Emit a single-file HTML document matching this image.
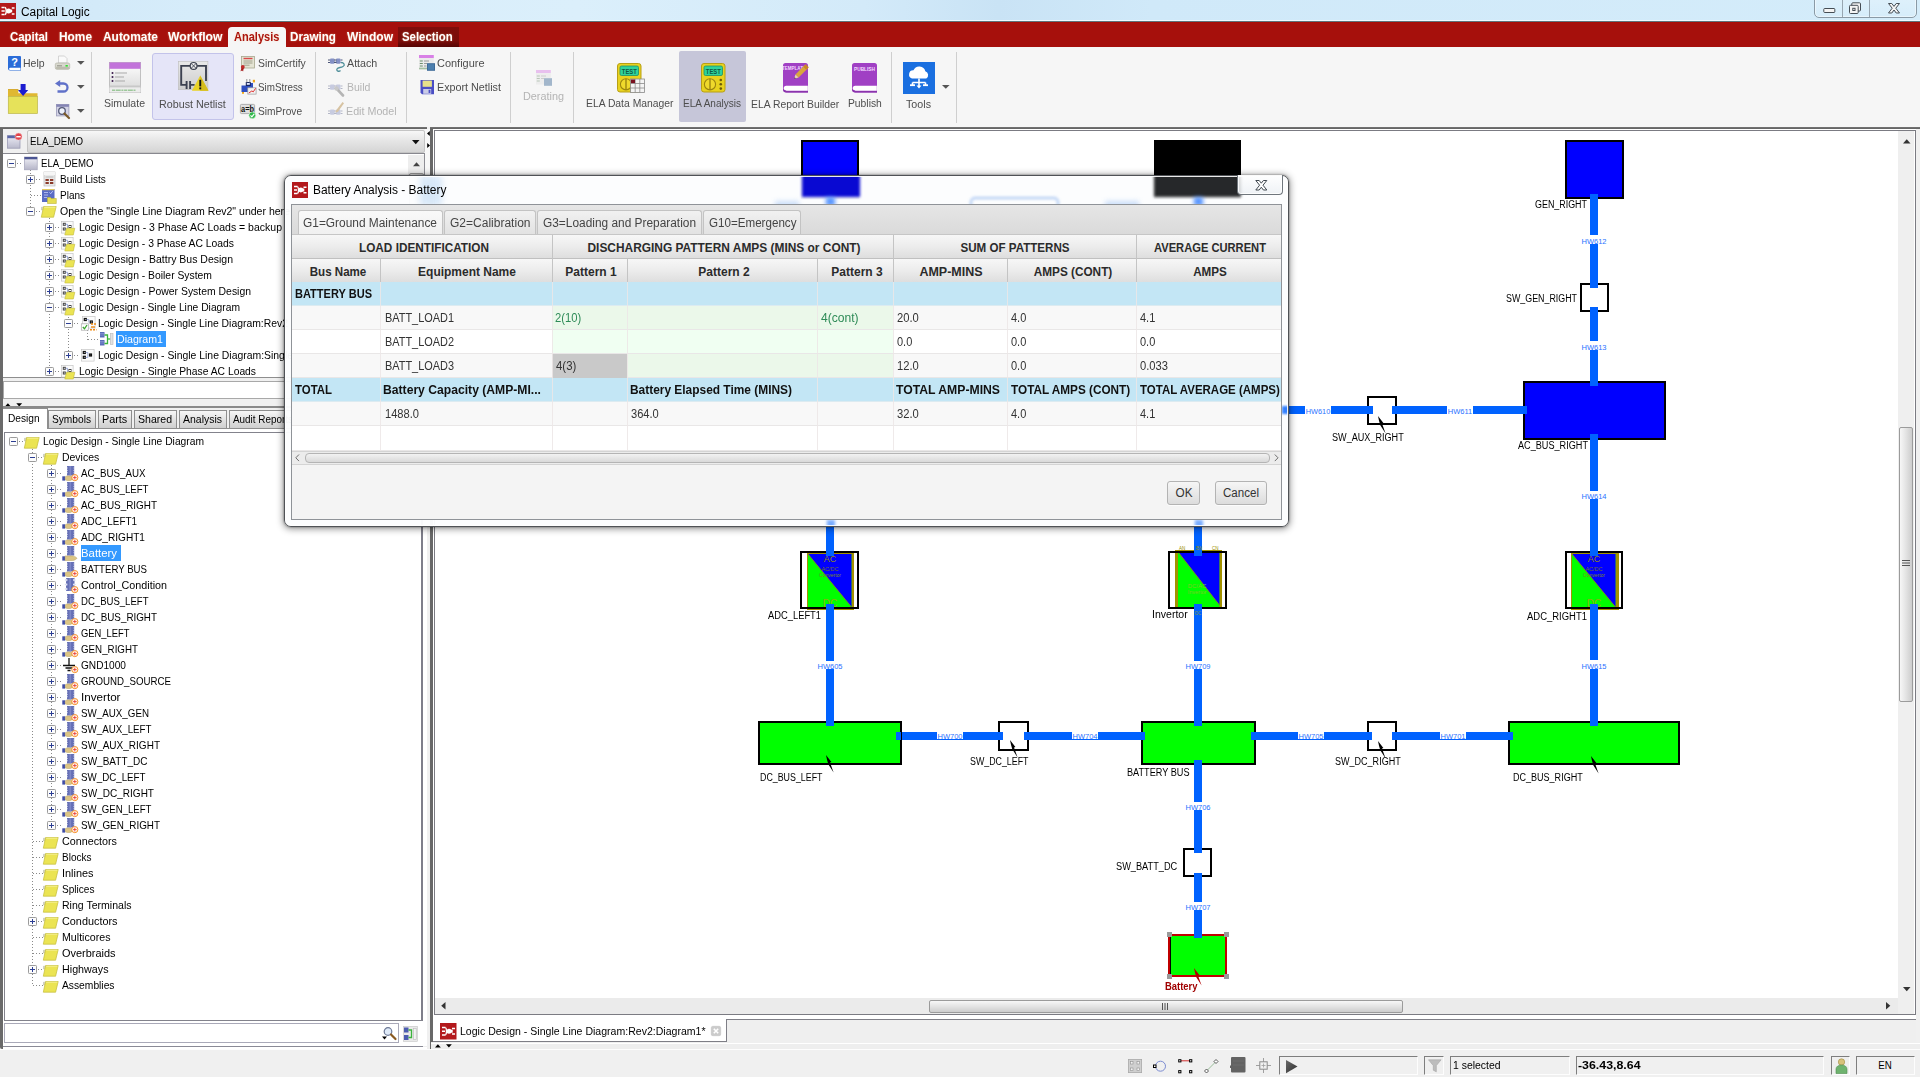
<!DOCTYPE html>
<html lang="en"><head><meta charset="utf-8"><title>Capital Logic</title>
<style>
html,body{margin:0;padding:0}
body{width:1920px;height:1077px;position:relative;overflow:hidden;background:#f0f0f0;font-family:'Liberation Sans', sans-serif}
.t{position:absolute;white-space:nowrap;line-height:1;font-family:'Liberation Sans', sans-serif}
div{box-sizing:border-box}
svg{overflow:visible}
svg text{font-family:'Liberation Sans', sans-serif}
</style></head>
<body>
<div style="position:absolute;left:0px;top:0px;width:1920px;height:20px;background:linear-gradient(90deg,#d0e8f8 0%,#d6ecfa 10%,#dbeffb 30%,#d3eaf9 45%,#c9e3f5 52%,#d0e9f9 60%,#d4ecfa 100%);"></div>
<div style="position:absolute;left:0px;top:20px;width:1920px;height:1px;background:#eefaff"></div>
<div style="position:absolute;left:0px;top:21px;width:1920px;height:1px;background:#5f737b"></div>
<svg style="position:absolute;left:0px;top:3px;" width="16" height="16" viewBox="0 0 16 16"><rect width="16" height="16" fill="#b3191c"/><g fill="none" stroke="#fff" stroke-width="1.6"><path d="M1.5 4.5h3.2M1.5 8h3.2M1.5 11.5h3.2"/><path d="M5 4.3c1.6.6 1.6 6.8 0 7.4" stroke-width="1.4"/><path d="M14.5 5h-2.7M14.5 11h-2.7"/></g><circle cx="8.6" cy="8" r="2.5" fill="#fff"/><rect x="9" y="6.6" width="3.2" height="2.8" fill="#fff"/></svg>
<span id="t0" class="t" style="left:21.3px;top:5.54px;font-size:12px;font-weight:400;color:#000;transform-origin:left center;transform:scaleX(0.9903);">Capital Logic</span>
<div style="position:absolute;left:1814.2px;top:-3px;width:102.5px;height:20.8px;border:1px solid #8a9aa6;border-radius:0 0 5px 5px;background:linear-gradient(rgba(255,255,255,.25),rgba(255,255,255,.05));box-shadow:inset 0 0 0 1px rgba(255,255,255,.45)"></div>
<div style="position:absolute;left:1842.3px;top:0px;width:1px;height:17px;background:#98a6b1"></div>
<div style="position:absolute;left:1869.4px;top:0px;width:1px;height:17px;background:#98a6b1"></div>
<svg style="position:absolute;left:1814px;top:0px;" width="103" height="18" viewBox="0 0 103 18"><rect x="9.800" y="8.500" width="11" height="4" rx=".8" fill="#f4f4f4" stroke="#454d55"/><g fill="#f4f4f4" stroke="#454d55"><rect x="37.800" y="2.800" width="8.700" height="8.200" rx="1"/><rect x="35.500" y="5.300" width="8.700" height="8.200" rx="1"/><rect x="38.800" y="8.300" width="2.200" height="2.200" fill="#fff"/></g><path d="M74.500 3.500h3.300l2.200 2.900 2.200-2.900h3.300l-3.700 4.700 3.700 4.800h-3.300l-2.200-3-2.200 3h-3.300l3.700-4.800z" fill="#f4f4f4" stroke="#454d55" stroke-width="1"/></svg>
<div style="position:absolute;left:0px;top:22px;width:1920px;height:25px;background:linear-gradient(#ad0c02 0,#a6100c 1.500px)"></div>
<div style="position:absolute;left:398px;top:27px;width:60.5px;height:20px;background:linear-gradient(#7f0e0a 0%,#7a0c09 70%,#560504 100%)"></div>
<div style="position:absolute;left:228px;top:27px;width:57.5px;height:20px;background:#f6f6f6;border-radius:4px 4px 0 0"></div>
<span id="t1" class="t" style="left:10px;top:29.91px;font-size:13px;font-weight:700;color:#fff;transform-origin:left center;transform:scaleX(0.8767);text-shadow:0 0 2px rgba(255,220,160,.55)">Capital</span>
<span id="t2" class="t" style="left:59.4px;top:29.91px;font-size:13px;font-weight:700;color:#fff;transform-origin:left center;transform:scaleX(0.9135);text-shadow:0 0 2px rgba(255,220,160,.55)">Home</span>
<span id="t3" class="t" style="left:102.8px;top:29.91px;font-size:13px;font-weight:700;color:#fff;transform-origin:left center;transform:scaleX(0.9174);text-shadow:0 0 2px rgba(255,220,160,.55)">Automate</span>
<span id="t4" class="t" style="left:167.5px;top:29.91px;font-size:13px;font-weight:700;color:#fff;transform-origin:left center;transform:scaleX(0.9354);text-shadow:0 0 2px rgba(255,220,160,.55)">Workflow</span>
<span id="t5" class="t" style="left:233.6px;top:29.91px;font-size:13px;font-weight:700;color:#ab150e;transform-origin:left center;transform:scaleX(0.8488);text-shadow:0 0 2px rgba(255,200,150,.5)">Analysis</span>
<span id="t6" class="t" style="left:290px;top:29.91px;font-size:13px;font-weight:700;color:#fff;transform-origin:left center;transform:scaleX(0.8967);text-shadow:0 0 2px rgba(255,220,160,.55)">Drawing</span>
<span id="t7" class="t" style="left:346.8px;top:29.91px;font-size:13px;font-weight:700;color:#fff;transform-origin:left center;transform:scaleX(0.9255);text-shadow:0 0 2px rgba(255,220,160,.55)">Window</span>
<span id="t8" class="t" style="left:402.4px;top:29.91px;font-size:13px;font-weight:700;color:#fff;transform-origin:left center;transform:scaleX(0.8755);text-shadow:0 0 2px rgba(255,220,160,.55)">Selection</span>
<div style="position:absolute;left:0px;top:47px;width:1920px;height:79.5px;background:#f6f6f6"></div>
<div style="position:absolute;left:91px;top:51.5px;width:1px;height:71px;background:#cfcfcf"></div>
<div style="position:absolute;left:315px;top:51.5px;width:1px;height:71px;background:#cfcfcf"></div>
<div style="position:absolute;left:406px;top:51.5px;width:1px;height:71px;background:#cfcfcf"></div>
<div style="position:absolute;left:510px;top:51.5px;width:1px;height:71px;background:#cfcfcf"></div>
<div style="position:absolute;left:573px;top:51.5px;width:1px;height:71px;background:#cfcfcf"></div>
<div style="position:absolute;left:890.5px;top:51.5px;width:1px;height:71px;background:#cfcfcf"></div>
<div style="position:absolute;left:956px;top:51.5px;width:1px;height:71px;background:#cfcfcf"></div>
<div style="position:absolute;left:0px;top:126.8px;width:427px;height:2.5px;background:linear-gradient(#8a8a8a,#5c5c5c 45%,#6e6e6e)"></div>
<div style="position:absolute;left:430px;top:126.8px;width:1490px;height:2.5px;background:linear-gradient(#8a8a8a,#5c5c5c 45%,#6e6e6e)"></div>
<svg style="position:absolute;left:7.8px;top:55.6px;" width="13" height="15" viewBox="0 0 13 15"><path d="M1 0h11a1 1 0 0 1 1 1v13.500H2a2 2 0 0 1-2-2V1a1 1 0 0 1 1-1z" fill="#2b6cd8"/><path d="M1.500 11.800h11v2.200H2.200a1.100 1.100 0 0 1 0-2.200z" fill="#fff"/><text x="6.600" y="9.800" font-size="11" font-weight="700" fill="#fff" text-anchor="middle">?</text></svg>
<span id="t9" class="t" style="left:23.4px;top:57.55px;font-size:11.5px;font-weight:400;color:#4d4d4d;transform-origin:left center;transform:scaleX(0.9131);">Help</span>
<svg style="position:absolute;left:54.8px;top:56px;" width="15" height="14" viewBox="0 0 15 14"><path d="M3.500 0h6l2.500 2.500V7h-8.500z" fill="#fafafa" stroke="#bdbdbd" stroke-width=".6"/><rect x="0.300" y="7" width="14.400" height="6.300" rx="1.500" fill="#d9d9cf" stroke="#a9a99c" stroke-width=".6"/><rect x="1" y="10.800" width="13" height="2.500" rx="1" fill="#bcbcae"/><rect x="10.500" y="9" width="2.300" height="1.600" fill="#2fe02f"/><rect x="2" y="9.300" width="5" height="1" fill="#8f8f84"/></svg>
<svg style="position:absolute;left:77.2px;top:61px;" width="8" height="4" viewBox="0 0 8 4"><path d="M0 0h7.600l-3.800 3.800z" fill="#555"/></svg>
<svg style="position:absolute;left:8.2px;top:84px;" width="30" height="30" viewBox="0 0 30 30"><path d="M0 5.200h10.300l0 4h19.200v3.500H0z" fill="#e0b832"/><path d="M0 5.200h10.300v.8H0z" fill="#d2a428"/><rect x=".3" y="12.400" width="29.100" height="17" fill="#e6e25a" stroke="#bdb645" stroke-width=".7"/><path d="M12.600 0h5v5.900h2.600l-5.100 6.100-5.100-6.100h2.600z" fill="#1c1cd0"/></svg>
<svg style="position:absolute;left:55px;top:80px;" width="15" height="13.5" viewBox="0 0 15 13.5"><path d="M3.500 3.500H8.500a4 4 0 0 1 0 8H2.500" fill="none" stroke="#6071c9" stroke-width="2.300"/><path d="M0 3.500l5.200-3.500v7z" fill="#6071c9"/></svg>
<svg style="position:absolute;left:77.2px;top:85.3px;" width="8" height="4" viewBox="0 0 8 4"><path d="M0 0h7.600l-3.800 3.800z" fill="#555"/></svg>
<svg style="position:absolute;left:55.6px;top:103.8px;" width="14" height="14.5" viewBox="0 0 14 14.5"><rect x=".4" y=".4" width="12.500" height="11.500" fill="#d4d4e6" stroke="#9c9cba" stroke-width=".8"/><rect x=".4" y=".4" width="12.500" height="2.400" fill="#8484b4"/><circle cx="6" cy="7" r="3.300" fill="#eef2fb" stroke="#555a78" stroke-width="1.300"/><path d="M8.500 9.500l4.500 4.500" stroke="#7a5a2a" stroke-width="2.200" stroke-linecap="round"/></svg>
<svg style="position:absolute;left:77.2px;top:109.4px;" width="8" height="4" viewBox="0 0 8 4"><path d="M0 0h7.600l-3.800 3.800z" fill="#555"/></svg>
<svg style="position:absolute;left:108.8px;top:62px;" width="32" height="31" viewBox="0 0 32 31"><defs><linearGradient id="sg" x1="0" y1="0" x2="0" y2="1"><stop offset="0" stop-color="#fff"/><stop offset="1" stop-color="#d6d6d6"/></linearGradient></defs><rect x=".4" y=".4" width="31.200" height="30.200" fill="url(#sg)" stroke="#b4b4b4" stroke-width=".8"/><rect x=".4" y=".4" width="31.200" height="6.400" fill="#c273da"/><rect x=".4" y="23.500" width="31.200" height="2" fill="#c8c8c8"/><rect x=".4" y="25.500" width="31.200" height="5" fill="#ececec"/><g fill="#3a1a4a"><circle cx="3.500" cy="11" r="1"/><circle cx="3.500" cy="15" r="1"/><circle cx="3.500" cy="19" r="1"/></g><g stroke="#a9a9a9" stroke-width="1"><path d="M6 11h12M6 15h9M6 19h10"/></g><path d="M3 28.200h24" stroke="#9cc79a" stroke-width="1.400" stroke-dasharray="3 .7 5 .7 2 .7"/></svg>
<span id="t10" class="t" style="left:104px;top:97.75px;font-size:11.5px;font-weight:400;color:#4d4d4d;transform-origin:left center;transform:scaleX(0.9162);">Simulate</span>
<div style="position:absolute;left:152px;top:53px;width:81.5px;height:66.5px;background:#e5e5f8;border:1px solid #c3c3ea;border-radius:3px"></div>
<svg style="position:absolute;left:177.8px;top:61.3px;" width="30.5" height="29.5" viewBox="0 0 30.5 29.5"><defs><linearGradient id="rg" x1="0" y1="0" x2="0" y2="1"><stop offset="0" stop-color="#e9e9e9"/><stop offset="1" stop-color="#cdcdcd"/></linearGradient></defs><rect x=".3" y=".3" width="29.600" height="28.400" fill="url(#rg)" stroke="#bdbdbd" stroke-width=".6"/><path d="M12.100 4.900H3.200v19h5.400M8.600 19.900v8M12.100 19.900v8M12.100 23.900h4.500M19.100 4.900H28v15" fill="none" stroke="#3c4150" stroke-width="1.900"/><circle cx="15.600" cy="4.900" r="3.400" fill="#ececec" stroke="#3c4150" stroke-width="1.200"/><path d="M13.300 2.600l4.600 4.600M17.900 2.600l-4.600 4.600" stroke="#3c4150" stroke-width=".9"/><path d="M22.200 14.500l8.300 15.300H13.900z" fill="#e9d226"/><path d="M22.200 14.500l8.300 15.300h-8.300z" fill="#d6bd1c"/><rect x="21.300" y="18.800" width="1.900" height="6.600" fill="#111"/><rect x="21.300" y="26.400" width="1.900" height="1.900" fill="#111"/></svg>
<span id="t11" class="t" style="left:158.8px;top:98.75px;font-size:11.5px;font-weight:400;color:#4d4d4d;transform-origin:left center;transform:scaleX(0.9330);">Robust Netlist</span>
<svg style="position:absolute;left:240px;top:55.5px;" width="15.5" height="15.5" viewBox="0 0 15.5 15.5"><rect x="1.500" y=".4" width="13" height="11.600" fill="#e4e4d4" stroke="#a7a78f" stroke-width=".8"/><path d="M3.500 2.500h9" stroke="#d84a4a" stroke-width="1.400"/><path d="M3.500 5h9M3.500 7h9M3.500 9.200h6" stroke="#9a9a86" stroke-width=".9"/><circle cx="2.800" cy="11" r="1.900" fill="#c22a2a"/><path d="M1.500 12l-1 3.200 1.600-.8 1 1.100.6-3.300z" fill="#a61e1e"/></svg>
<span id="t12" class="t" style="left:258.3px;top:57.66px;font-size:11.5px;font-weight:400;color:#4d4d4d;transform-origin:left center;transform:scaleX(0.9014);">SimCertify</span>
<svg style="position:absolute;left:240.5px;top:79px;" width="15.5" height="15.5" viewBox="0 0 15.5 15.5"><path d="M.5 6.500h5v-2.500h6.500v5h2.500V13H.5z" fill="#2e4fc0"/><rect x="4.800" y="3" width="5" height="4" fill="#15245e"/><rect x="5.800" y="4" width="3" height="1.800" fill="#dfe6ff"/><path d="M5.800 0v3.500M8.800 0v3.500" stroke="#8c8c8c" stroke-width=".9"/><rect x="11.800" y=".8" width="2.200" height="2.600" fill="#f0a81c"/><rect x="1" y="13" width="2" height="1.800" fill="#f0a81c"/><rect x="6.800" y="8.800" width="8.300" height="6.300" fill="#f2f2f2" stroke="#9a9a9a" stroke-width=".7"/><path d="M7.800 14l3-2 1.500.8 2.300-3.500" fill="none" stroke="#e03030" stroke-width="1"/></svg>
<span id="t13" class="t" style="left:258.3px;top:81.75px;font-size:11.5px;font-weight:400;color:#4d4d4d;transform-origin:left center;transform:scaleX(0.8530);">SimStress</span>
<svg style="position:absolute;left:240px;top:104px;" width="15.5" height="15" viewBox="0 0 15.5 15"><rect x=".4" y=".4" width="14.200" height="9.200" rx="1" fill="#e0e0e0" stroke="#9d9d9d" stroke-width=".8"/><text x="7.500" y="7.800" font-size="8.500" font-weight="700" text-anchor="middle" fill="#111" textLength="13" lengthAdjust="spacingAndGlyphs">a=b</text><circle cx="12.300" cy="11.300" r="3.400" fill="#2eb84a" stroke="#eafbe9" stroke-width=".6"/><path d="M10.500 11.300l1.400 1.500 2.300-2.900" fill="none" stroke="#fff" stroke-width="1.200"/></svg>
<span id="t14" class="t" style="left:258.3px;top:105.75px;font-size:11.5px;font-weight:400;color:#4d4d4d;transform-origin:left center;transform:scaleX(0.8845);">SimProve</span>
<svg style="position:absolute;left:327.6px;top:55.5px;" width="17.5" height="16" viewBox="0 0 17.5 16"><g stroke="#4b5577" stroke-width="1"><path d="M0 4h2.500M0 6.500h2.500M12.500 4h2M12.500 6.500h2"/></g><rect x="2" y="2.600" width="4.500" height="5.200" rx="1" fill="#8390c4"/><rect x="8" y="2.600" width="4.500" height="5.200" rx="1" fill="#8390c4"/><path d="M6 4h2.500M6 6.400h2.500" stroke="#4b5577" stroke-width="1.200"/><path d="M13 6.500c3 0 4.500 2.500 2 4s-5 .5-6 2.500 2 3 3.500 1.500" fill="none" stroke="#4f8f9a" stroke-width="1.300"/></svg>
<span id="t15" class="t" style="left:346.8px;top:57.66px;font-size:11.5px;font-weight:400;color:#4d4d4d;transform-origin:left center;transform:scaleX(0.9292);">Attach</span>
<svg style="position:absolute;left:327.6px;top:81.5px;" width="17.5" height="16" viewBox="0 0 17.5 16"><g stroke="#b3b6c6" stroke-width="1"><path d="M0 4h2.500M0 6.500h2.500M12.500 4h2M12.500 6.500h2"/></g><rect x="2" y="2.600" width="4.500" height="5.200" rx="1" fill="#c7cbe0"/><rect x="8" y="2.600" width="4.500" height="5.200" rx="1" fill="#c7cbe0"/><path d="M6 4h2.500M6 6.400h2.500" stroke="#b3b6c6" stroke-width="1.200"/><path d="M9 7l6 6.500" stroke="#b5b5b5" stroke-width="2.600" stroke-linecap="round"/><circle cx="8.500" cy="6.500" r="2.200" fill="#c9c9c9"/></svg>
<span id="t16" class="t" style="left:347px;top:81.75px;font-size:11.5px;font-weight:400;color:#b4b4b4;transform-origin:left center;transform:scaleX(0.9109);">Build</span>
<svg style="position:absolute;left:327.6px;top:100.5px;" width="17.5" height="16" viewBox="0 0 17.5 16"><g stroke="#b3b6c6" stroke-width="1"><path d="M0 10h2.500M0 12.500h2.500M12.500 10h2M12.500 12.500h2"/></g><rect x="2" y="8.600" width="4.500" height="5.200" rx="1" fill="#c7cbe0"/><rect x="8" y="8.600" width="4.500" height="5.200" rx="1" fill="#c7cbe0"/><path d="M6 10h2.500M6 12.400h2.500" stroke="#b3b6c6" stroke-width="1.200"/><path d="M8 9.500l6.500-8.500 1.500 1.200-6 8.500-2.500.8z" fill="#d7c3a2"/></svg>
<span id="t17" class="t" style="left:346.1px;top:105.75px;font-size:11.5px;font-weight:400;color:#b4b4b4;transform-origin:left center;transform:scaleX(0.9329);">Edit Model</span>
<svg style="position:absolute;left:419.3px;top:54.8px;" width="16" height="16" viewBox="0 0 16 16"><rect x="0" y="0" width="14.800" height="3.200" fill="#d880e6"/><rect x="0" y="3.200" width="14.800" height="11.300" fill="#ebebeb"/><path d="M.8 6h3M.8 8.500h3M.8 11h3" stroke="#6f8f6f" stroke-width="1.100"/><path d="M5 6h5M5 8.500h3M5 11h2.500" stroke="#9c9c9c" stroke-width="1.100"/><path d="M0 13.500h8" stroke="#a5bfa2" stroke-width="1.600"/><rect x="8" y="8.200" width="8" height="7.600" fill="#3d6a98"/><rect x="9" y="9.200" width="6" height="5.600" fill="#4d7fae"/></svg>
<span id="t18" class="t" style="left:436.5px;top:57.66px;font-size:11.5px;font-weight:400;color:#4d4d4d;transform-origin:left center;transform:scaleX(0.9524);">Configure</span>
<svg style="position:absolute;left:420.3px;top:79.8px;" width="14.5" height="14.3" viewBox="0 0 14.5 14.3"><path d="M.5 0h13.500v14.300H2L.5 12.800z" fill="#4a4ec4"/><rect x="2.600" y=".6" width="9.300" height="6.200" fill="#e6e08a"/><rect x="3.200" y="9" width="8" height="4.800" fill="#c9cbe6"/><rect x="8.600" y="9.800" width="1.800" height="3.200" fill="#4a4ec4"/></svg>
<span id="t19" class="t" style="left:437px;top:81.75px;font-size:11.5px;font-weight:400;color:#4d4d4d;transform-origin:left center;transform:scaleX(0.9358);">Export Netlist</span>
<svg style="position:absolute;left:536px;top:70px;" width="16" height="16" viewBox="0 0 16 16"><g opacity=".45"><rect x="0" y="0" width="14.800" height="3.200" fill="#d880e6"/><rect x="0" y="3.200" width="14.800" height="11.300" fill="#e4e4e4"/><path d="M.8 6h3M.8 8.500h3M.8 11h3" stroke="#6f8f6f" stroke-width="1.100"/><path d="M5 6h5M5 8.500h3" stroke="#9c9c9c" stroke-width="1.100"/><rect x="8" y="8.200" width="8" height="7.600" fill="#3d6a98"/></g></svg>
<span id="t20" class="t" style="left:523.3px;top:90.55px;font-size:11.5px;font-weight:400;color:#b4b4b4;transform-origin:left center;transform:scaleX(0.9432);">Derating</span>
<svg style="position:absolute;left:617px;top:63px;" width="28" height="30" viewBox="0 0 28 30"><rect x=".5" y=".5" width="23.500" height="28.500" rx="2.500" fill="#e8d21e" stroke="#b89f14" stroke-width="1"/><rect x="3" y="3" width="18.500" height="9.500" rx="1.500" fill="#2fd39b" stroke="#1e8f6a" stroke-width=".8"/><text x="12.300" y="10.700" font-size="8" font-weight="700" fill="#0e5a43" text-anchor="middle" textLength="15" lengthAdjust="spacingAndGlyphs">TEST</text><circle cx="9" cy="21.300" r="5.600" fill="#efd92c" stroke="#9c8510" stroke-width="1.100"/><path d="M9 15.700v11.200" stroke="#9c8510" stroke-width="1.400"/><rect x="13.500" y="16" width="14" height="13.500" fill="#f4f4f4" stroke="#8a8a8a" stroke-width=".8"/><path d="M13.500 20.500h14M13.500 25h14M18.200 16v13.500M22.800 16v13.500" stroke="#8a8a8a" stroke-width=".8"/><rect x="14" y="16.500" width="4" height="3.600" fill="#7a1020"/></svg>
<span id="t21" class="t" style="left:586.3px;top:97.66px;font-size:11.5px;font-weight:400;color:#4d4d4d;transform-origin:left center;transform:scaleX(0.9005);">ELA Data Manager</span>
<div style="position:absolute;left:679px;top:51.3px;width:67px;height:70.5px;background:#c6c6d9;border-radius:2px"></div>
<svg style="position:absolute;left:701px;top:63px;" width="25" height="30" viewBox="0 0 25 30"><rect x=".5" y=".5" width="23.500" height="28.500" rx="2.500" fill="#e8d21e" stroke="#b89f14" stroke-width="1"/><rect x="3" y="3" width="18.500" height="9.500" rx="1.500" fill="#2fd39b" stroke="#1e8f6a" stroke-width=".8"/><text x="12.300" y="10.700" font-size="8" font-weight="700" fill="#0e5a43" text-anchor="middle" textLength="15" lengthAdjust="spacingAndGlyphs">TEST</text><circle cx="9" cy="21.300" r="5.600" fill="#efd92c" stroke="#9c8510" stroke-width="1.100"/><path d="M9 15.700v11.200" stroke="#9c8510" stroke-width="1.400"/><g fill="#6b5c0a"><circle cx="19.800" cy="17" r="1.300"/><circle cx="19.800" cy="21.300" r="1.300"/><circle cx="19.800" cy="25.600" r="1.300"/></g></svg>
<span id="t22" class="t" style="left:683.3px;top:97.66px;font-size:11.5px;font-weight:400;color:#4d4d4d;transform-origin:left center;transform:scaleX(0.8724);">ELA Analysis</span>
<svg style="position:absolute;left:783px;top:63px;" width="29" height="30" viewBox="0 0 29 30"><path d="M2.500 0h20a2.500 2.500 0 0 1 2.500 2.500V29.500H3.500A3.500 3.500 0 0 1 0 26V2.500A2.500 2.500 0 0 1 2.500 0z" fill="#a040c4"/><path d="M2.800 22.800h22v5H3.200a2.500 2.500 0 0 1 0-5z" fill="#fff"/><path d="M0 26a3.500 3.500 0 0 0 3.500 3.500H25v-1.500H3.500z" fill="#8a34ac"/><text x="11" y="6.800" font-size="4.500" font-weight="700" fill="#f3dcff" text-anchor="middle">TEMPLATE</text><g transform="translate(14,13) rotate(-45)"><rect x="0" y="-2.200" width="14" height="4.400" fill="#d9a63c"/><rect x="11" y="-2.200" width="3.500" height="4.400" fill="#c8862a"/><path d="M0-2.200L-4 0 0 2.200z" fill="#e9d4a8"/><path d="M-2.500-.9L-4 0l1.500.9z" fill="#333"/></g></svg>
<span id="t23" class="t" style="left:750.5px;top:98.75px;font-size:11.5px;font-weight:400;color:#4d4d4d;transform-origin:left center;transform:scaleX(0.9027);">ELA Report Builder</span>
<svg style="position:absolute;left:852px;top:63px;" width="25" height="30" viewBox="0 0 25 30"><path d="M2.500 0h20a2.500 2.500 0 0 1 2.500 2.500V29.500H3.500A3.500 3.500 0 0 1 0 26V2.500A2.500 2.500 0 0 1 2.500 0z" fill="#a040c4"/><path d="M2.800 22.800h22v5H3.200a2.500 2.500 0 0 1 0-5z" fill="#fff"/><path d="M0 26a3.500 3.500 0 0 0 3.500 3.500H25v-1.500H3.500z" fill="#8a34ac"/><text x="12.500" y="8" font-size="5.600" font-weight="700" fill="#f3dcff" text-anchor="middle" textLength="21" lengthAdjust="spacingAndGlyphs">PUBLISH</text></svg>
<span id="t24" class="t" style="left:847.5px;top:97.66px;font-size:11.5px;font-weight:400;color:#4d4d4d;transform-origin:left center;transform:scaleX(0.8961);">Publish</span>
<svg style="position:absolute;left:903px;top:62px;" width="32" height="32" viewBox="0 0 32 32"><rect width="32" height="32" fill="#1a6fe0"/><path d="M9 16.500a4.200 4.200 0 0 1 1.500-8.200 6.200 6.200 0 0 1 11.800 1 4 4 0 0 1 1 7.200z" fill="#fff"/><path d="M16 16.500v8M9.500 20.500h13M9.500 20.500v2.500M22.500 20.500v2.500" stroke="#fff" stroke-width="1.600" fill="none"/><path d="M13.500 23.500h5l-2.500 3z" fill="#fff"/><rect x="7" y="22.300" width="5" height="1.800" fill="#fff"/><rect x="20" y="22.300" width="5" height="1.800" fill="#fff"/></svg>
<span id="t25" class="t" style="left:906.3px;top:98.75px;font-size:11.5px;font-weight:400;color:#4d4d4d;transform-origin:left center;transform:scaleX(0.9308);">Tools</span>
<svg style="position:absolute;left:942px;top:85.3px;" width="8" height="4" viewBox="0 0 8 4"><path d="M0 0h7.600l-3.800 3.800z" fill="#555"/></svg>
<div style="position:absolute;left:0px;top:129px;width:2.7px;height:919.6px;background:#6a6a6a;border-radius:0 0 0 2px"></div>
<div style="position:absolute;left:2.7px;top:129px;width:424.3px;height:918px;background:#f0f0f0"></div>
<div style="position:absolute;left:425px;top:129px;width:5px;height:290px;background:#f8f8f8"></div>
<svg style="position:absolute;left:427px;top:131px;" width="3" height="17.5" viewBox="0 0 3 17.5"><path d="M2.800 0v5l-2.800-2.500z" fill="#000"/><path d="M.2 12v5l2.800-2.500z" fill="#000"/></svg>
<svg style="position:absolute;left:6.5px;top:132.8px;" width="15.5" height="16" viewBox="0 0 15.5 16"><defs><linearGradient id="wg" x1="0" y1="0" x2="0" y2="1"><stop offset="0" stop-color="#ededf6"/><stop offset="1" stop-color="#b9b9cc"/></linearGradient></defs><rect x=".4" y="2.600" width="12.600" height="12.600" fill="url(#wg)" stroke="#9c9cb4" stroke-width=".8"/><rect x=".4" y="2.600" width="12.600" height="2.600" fill="#5a66a8"/><circle cx="11.500" cy="3.600" r="3.500" fill="#e0434b" stroke="#f7c6c8" stroke-width=".5"/><rect x="9.300" y="3" width="4.400" height="1.400" fill="#fff"/></svg>
<div style="position:absolute;left:27.3px;top:129.5px;width:397.3px;height:23px;background:linear-gradient(#f7f7f7 0%,#e6e6e6 45%,#d5d5d5 100%);border:1px solid #c4c4c4;border-radius:2px"></div>
<span id="t26" class="t" style="left:30.2px;top:135.67px;font-size:11px;font-weight:400;color:#000;transform-origin:left center;transform:scaleX(0.8845);">ELA_DEMO</span>
<svg style="position:absolute;left:411.5px;top:140px;" width="8" height="4.5" viewBox="0 0 8 4.5"><path d="M0 0h7.500l-3.750 4.200z" fill="#111"/></svg>
<div style="position:absolute;left:3px;top:153px;width:422px;height:225px;background:#fff;border-top:1.500px solid #88888f;border-bottom:1px solid #8e8e8e;border-right:1px solid #8e8e95"></div>
<div style="position:absolute;left:408.2px;top:154.5px;width:15.8px;height:222.5px;background:#eeeeee"></div>
<svg style="position:absolute;left:413px;top:162px;" width="7" height="4.5" viewBox="0 0 7 4.5"><path d="M0 4.200h7l-3.500-4z" fill="#444"/></svg>
<div style="position:absolute;left:409px;top:173.3px;width:14.5px;height:120px;background:linear-gradient(90deg,#f7f7f7,#e3e3e3 50%,#cdcdcd);border:1px solid #9b9b9b;border-radius:2px"></div>
<svg style="position:absolute;left:0px;top:0px;" width="1" height="1" viewBox="0 0 1 1"><path d="M30.500 170v37" stroke="#8a8a8a" stroke-width="1" stroke-dasharray="1 2" fill="none"/><path d="M49.500 218v149" stroke="#8a8a8a" stroke-width="1" stroke-dasharray="1 2" fill="none"/><path d="M68.500 314v37" stroke="#8a8a8a" stroke-width="1" stroke-dasharray="1 2" fill="none"/><path d="M87.500 330v10" stroke="#8a8a8a" stroke-width="1" stroke-dasharray="1 2" fill="none"/></svg>
<svg style="position:absolute;left:0px;top:0px;" width="1" height="1" viewBox="0 0 1 1"><path d="M17 163.5H23" stroke="#8a8a8a" stroke-width="1" stroke-dasharray="1 2" fill="none"/><rect x="7.5" y="159.5" width="8" height="8" rx=".8" fill="#fcfcfc" stroke="#9b9b9b" stroke-width="1"/><path d="M9.0 163.5h5" stroke="#2c3e93" stroke-width="1"/></svg>
<svg style="position:absolute;left:23.8px;top:156.7px;" width="16" height="16" viewBox="0 0 16 16"><defs><linearGradient id="wg2" x1="0" y1="0" x2="0" y2="1"><stop offset="0" stop-color="#f2f2f8"/><stop offset="1" stop-color="#b5b5c8"/></linearGradient></defs><rect x=".4" y="0" width="12.800" height="12.800" fill="url(#wg2)" stroke="#a5a5bb" stroke-width=".7"/><rect x=".4" y="0" width="12.800" height="2.300" fill="#4b5593"/></svg>
<span id="t27" class="t" style="left:40.6px;top:157.97px;font-size:11px;font-weight:400;color:#000;transform-origin:left center;transform:scaleX(0.8761);">ELA_DEMO</span>
<svg style="position:absolute;left:0px;top:0px;" width="1" height="1" viewBox="0 0 1 1"><path d="M36 179.5H42" stroke="#8a8a8a" stroke-width="1" stroke-dasharray="1 2" fill="none"/><rect x="26.5" y="175.5" width="8" height="8" rx=".8" fill="#fcfcfc" stroke="#9b9b9b" stroke-width="1"/><path d="M28.0 179.5h5" stroke="#2c3e93" stroke-width="1"/><path d="M30.5 177.0v5" stroke="#2c3e93" stroke-width="1"/></svg>
<svg style="position:absolute;left:42.8px;top:172.2px;" width="16" height="16" viewBox="0 0 16 16"><rect x="1" y="0" width="11" height="14" fill="#e9e9e9" stroke="#bcbcbc" stroke-width=".7"/><rect x="1" y="0" width="11" height="3" fill="#f6f6f6"/><g fill="#8c3b2a"><rect x="2.500" y="7" width="3.300" height="2"/><rect x="7" y="7" width="3.300" height="2"/><rect x="2.500" y="10" width="3.300" height="2"/><rect x="7" y="10" width="3.300" height="2"/></g><path d="M2.500 5h8" stroke="#aaa" stroke-width=".8"/></svg>
<span id="t28" class="t" style="left:59.6px;top:173.97px;font-size:11px;font-weight:400;color:#000;transform-origin:left center;transform:scaleX(0.9134);">Build Lists</span>
<svg style="position:absolute;left:0px;top:0px;" width="1" height="1" viewBox="0 0 1 1"><path d="M31 195.5H42" stroke="#8a8a8a" stroke-width="1" stroke-dasharray="1 2" fill="none"/></svg>
<svg style="position:absolute;left:42.0px;top:188.7px;" width="16" height="16" viewBox="0 0 16 16"><rect x="0" y="0" width="12.500" height="13" fill="#5a6cc4"/><rect x="0" y="0" width="12.500" height="1.200" fill="#e0c860"/><path d="M2 3.500h4M2 6h4M2 8.500h3" stroke="#aeb8ee" stroke-width="1.200"/><path d="M7.500 3.500l1.200 1.200 2-2.500" stroke="#c8d0ff" fill="none" stroke-width=".9"/><path d="M5.500 8.500h3l.8 1h5v5H5.500z" fill="#e6de50" stroke="#bdb53a" stroke-width=".6"/></svg>
<span id="t29" class="t" style="left:59.6px;top:189.97px;font-size:11px;font-weight:400;color:#000;transform-origin:left center;transform:scaleX(0.9081);">Plans</span>
<svg style="position:absolute;left:0px;top:0px;" width="1" height="1" viewBox="0 0 1 1"><path d="M36 211.5H42" stroke="#8a8a8a" stroke-width="1" stroke-dasharray="1 2" fill="none"/><rect x="26.5" y="207.5" width="8" height="8" rx=".8" fill="#fcfcfc" stroke="#9b9b9b" stroke-width="1"/><path d="M28.0 211.5h5" stroke="#2c3e93" stroke-width="1"/></svg>
<svg style="position:absolute;left:41.199999999999996px;top:205.39999999999998px;" width="16" height="16" viewBox="0 0 16 16"><path d="M.5 2.200h4.500l1 1.300h5.500V5H.5z" fill="#d9d9c7" stroke="#b7b7a2" stroke-width=".5"/><path d="M2.600 1.500h12.600L12.600 12.200H.3z" fill="#ebe453" stroke="#c3bb3a" stroke-width=".7"/><path d="M3.200 2.200h11.200" stroke="#f7f3a3" stroke-width=".8"/></svg>
<span id="t30" class="t" style="left:59.6px;top:205.97px;font-size:11px;font-weight:400;color:#000;transform-origin:left center;transform:scaleX(0.9576);">Open the "Single Line Diagram Rev2" under here</span>
<svg style="position:absolute;left:0px;top:0px;" width="1" height="1" viewBox="0 0 1 1"><path d="M55 227.5H61" stroke="#8a8a8a" stroke-width="1" stroke-dasharray="1 2" fill="none"/><rect x="45.5" y="223.5" width="8" height="8" rx=".8" fill="#fcfcfc" stroke="#9b9b9b" stroke-width="1"/><path d="M47.0 227.5h5" stroke="#2c3e93" stroke-width="1"/><path d="M49.5 225.0v5" stroke="#2c3e93" stroke-width="1"/></svg>
<svg style="position:absolute;left:60.8px;top:220.7px;" width="16" height="16" viewBox="0 0 16 16"><rect x=".3" y=".3" width="11.800" height="11.800" fill="#fbfbfb" stroke="#bdbdbd" stroke-width=".6"/><g fill="none" stroke="#444" stroke-width="1"><rect x="2.300" y="2.300" width="2" height="2"/><rect x="2.300" y="7" width="2" height="2"/><rect x="8" y="4.500" width="2" height="2"/></g><path d="M4.500 3.300h2v5h-2" fill="none" stroke="#8c9ccf" stroke-width=".8"/><path d="M5.500 7.300h8.300L12.300 14H3.800z" fill="#ebe453" stroke="#c3bb3a" stroke-width=".6"/></svg>
<span id="t31" class="t" style="left:78.6px;top:221.97px;font-size:11px;font-weight:400;color:#000;transform-origin:left center;transform:scaleX(0.9553);">Logic Design - 3 Phase AC Loads = backup</span>
<svg style="position:absolute;left:0px;top:0px;" width="1" height="1" viewBox="0 0 1 1"><path d="M55 243.5H61" stroke="#8a8a8a" stroke-width="1" stroke-dasharray="1 2" fill="none"/><rect x="45.5" y="239.5" width="8" height="8" rx=".8" fill="#fcfcfc" stroke="#9b9b9b" stroke-width="1"/><path d="M47.0 243.5h5" stroke="#2c3e93" stroke-width="1"/><path d="M49.5 241.0v5" stroke="#2c3e93" stroke-width="1"/></svg>
<svg style="position:absolute;left:60.8px;top:236.7px;" width="16" height="16" viewBox="0 0 16 16"><rect x=".3" y=".3" width="11.800" height="11.800" fill="#fbfbfb" stroke="#bdbdbd" stroke-width=".6"/><g fill="none" stroke="#444" stroke-width="1"><rect x="2.300" y="2.300" width="2" height="2"/><rect x="2.300" y="7" width="2" height="2"/><rect x="8" y="4.500" width="2" height="2"/></g><path d="M4.500 3.300h2v5h-2" fill="none" stroke="#8c9ccf" stroke-width=".8"/><path d="M5.500 7.300h8.300L12.300 14H3.800z" fill="#ebe453" stroke="#c3bb3a" stroke-width=".6"/></svg>
<span id="t32" class="t" style="left:78.6px;top:237.97px;font-size:11px;font-weight:400;color:#000;transform-origin:left center;transform:scaleX(0.9422);">Logic Design - 3 Phase AC Loads</span>
<svg style="position:absolute;left:0px;top:0px;" width="1" height="1" viewBox="0 0 1 1"><path d="M55 259.5H61" stroke="#8a8a8a" stroke-width="1" stroke-dasharray="1 2" fill="none"/><rect x="45.5" y="255.5" width="8" height="8" rx=".8" fill="#fcfcfc" stroke="#9b9b9b" stroke-width="1"/><path d="M47.0 259.5h5" stroke="#2c3e93" stroke-width="1"/><path d="M49.5 257.0v5" stroke="#2c3e93" stroke-width="1"/></svg>
<svg style="position:absolute;left:60.8px;top:252.7px;" width="16" height="16" viewBox="0 0 16 16"><rect x=".3" y=".3" width="11.800" height="11.800" fill="#fbfbfb" stroke="#bdbdbd" stroke-width=".6"/><g fill="none" stroke="#444" stroke-width="1"><rect x="2.300" y="2.300" width="2" height="2"/><rect x="2.300" y="7" width="2" height="2"/><rect x="8" y="4.500" width="2" height="2"/></g><path d="M4.500 3.300h2v5h-2" fill="none" stroke="#8c9ccf" stroke-width=".8"/><path d="M5.500 7.300h8.300L12.300 14H3.800z" fill="#ebe453" stroke="#c3bb3a" stroke-width=".6"/></svg>
<span id="t33" class="t" style="left:78.6px;top:253.97px;font-size:11px;font-weight:400;color:#000;transform-origin:left center;transform:scaleX(0.9540);">Logic Design - Battry Bus Design</span>
<svg style="position:absolute;left:0px;top:0px;" width="1" height="1" viewBox="0 0 1 1"><path d="M55 275.5H61" stroke="#8a8a8a" stroke-width="1" stroke-dasharray="1 2" fill="none"/><rect x="45.5" y="271.5" width="8" height="8" rx=".8" fill="#fcfcfc" stroke="#9b9b9b" stroke-width="1"/><path d="M47.0 275.5h5" stroke="#2c3e93" stroke-width="1"/><path d="M49.5 273.0v5" stroke="#2c3e93" stroke-width="1"/></svg>
<svg style="position:absolute;left:60.8px;top:268.7px;" width="16" height="16" viewBox="0 0 16 16"><rect x=".3" y=".3" width="11.800" height="11.800" fill="#fbfbfb" stroke="#bdbdbd" stroke-width=".6"/><g fill="none" stroke="#444" stroke-width="1"><rect x="2.300" y="2.300" width="2" height="2"/><rect x="2.300" y="7" width="2" height="2"/><rect x="8" y="4.500" width="2" height="2"/></g><path d="M4.500 3.300h2v5h-2" fill="none" stroke="#8c9ccf" stroke-width=".8"/><path d="M5.500 7.300h8.300L12.300 14H3.800z" fill="#ebe453" stroke="#c3bb3a" stroke-width=".6"/></svg>
<span id="t34" class="t" style="left:78.6px;top:269.97px;font-size:11px;font-weight:400;color:#000;transform-origin:left center;transform:scaleX(0.9417);">Logic Design - Boiler System</span>
<svg style="position:absolute;left:0px;top:0px;" width="1" height="1" viewBox="0 0 1 1"><path d="M55 291.5H61" stroke="#8a8a8a" stroke-width="1" stroke-dasharray="1 2" fill="none"/><rect x="45.5" y="287.5" width="8" height="8" rx=".8" fill="#fcfcfc" stroke="#9b9b9b" stroke-width="1"/><path d="M47.0 291.5h5" stroke="#2c3e93" stroke-width="1"/><path d="M49.5 289.0v5" stroke="#2c3e93" stroke-width="1"/></svg>
<svg style="position:absolute;left:60.8px;top:284.7px;" width="16" height="16" viewBox="0 0 16 16"><rect x=".3" y=".3" width="11.800" height="11.800" fill="#fbfbfb" stroke="#bdbdbd" stroke-width=".6"/><g fill="none" stroke="#444" stroke-width="1"><rect x="2.300" y="2.300" width="2" height="2"/><rect x="2.300" y="7" width="2" height="2"/><rect x="8" y="4.500" width="2" height="2"/></g><path d="M4.500 3.300h2v5h-2" fill="none" stroke="#8c9ccf" stroke-width=".8"/><path d="M5.500 7.300h8.300L12.300 14H3.800z" fill="#ebe453" stroke="#c3bb3a" stroke-width=".6"/></svg>
<span id="t35" class="t" style="left:78.6px;top:285.97px;font-size:11px;font-weight:400;color:#000;transform-origin:left center;transform:scaleX(0.9473);">Logic Design - Power System Design</span>
<svg style="position:absolute;left:0px;top:0px;" width="1" height="1" viewBox="0 0 1 1"><path d="M55 307.5H61" stroke="#8a8a8a" stroke-width="1" stroke-dasharray="1 2" fill="none"/><rect x="45.5" y="303.5" width="8" height="8" rx=".8" fill="#fcfcfc" stroke="#9b9b9b" stroke-width="1"/><path d="M47.0 307.5h5" stroke="#2c3e93" stroke-width="1"/></svg>
<svg style="position:absolute;left:60.8px;top:300.7px;" width="16" height="16" viewBox="0 0 16 16"><rect x=".3" y=".3" width="11.800" height="11.800" fill="#fbfbfb" stroke="#bdbdbd" stroke-width=".6"/><g fill="none" stroke="#444" stroke-width="1"><rect x="2.300" y="2.300" width="2" height="2"/><rect x="2.300" y="7" width="2" height="2"/><rect x="8" y="4.500" width="2" height="2"/></g><path d="M4.500 3.300h2v5h-2" fill="none" stroke="#8c9ccf" stroke-width=".8"/><path d="M5.500 7.300h8.300L12.300 14H3.800z" fill="#ebe453" stroke="#c3bb3a" stroke-width=".6"/></svg>
<span id="t36" class="t" style="left:78.6px;top:301.97px;font-size:11px;font-weight:400;color:#000;transform-origin:left center;transform:scaleX(0.9337);">Logic Design - Single Line Diagram</span>
<svg style="position:absolute;left:0px;top:0px;" width="1" height="1" viewBox="0 0 1 1"><path d="M74 323.5H80" stroke="#8a8a8a" stroke-width="1" stroke-dasharray="1 2" fill="none"/><rect x="64.5" y="319.5" width="8" height="8" rx=".8" fill="#fcfcfc" stroke="#9b9b9b" stroke-width="1"/><path d="M66.0 323.5h5" stroke="#2c3e93" stroke-width="1"/></svg>
<svg style="position:absolute;left:80.8px;top:316.2px;" width="16" height="16" viewBox="0 0 16 16"><rect x="1.300" y=".3" width="12.800" height="11.800" fill="#fbfbfb" stroke="#bdbdbd" stroke-width=".6"/><g fill="none" stroke="#111" stroke-width="1.200"><rect x="3.300" y="2.500" width="2" height="2"/><rect x="9.300" y="5" width="2" height="2"/></g><path d="M5.500 3.500h2.300v3" fill="none" stroke="#8c9ccf" stroke-width=".8"/><rect x=".3" y="7.800" width="7" height="6.400" fill="#fdfdfd" stroke="#a9a9a9" stroke-width=".7"/><path d="M1.800 11l1.700 1.800 2.500-3.800" fill="none" stroke="#3aa62e" stroke-width="1.300"/><g stroke="#f08a12" stroke-width="1.400"><path d="M10 8h5" stroke-dasharray="2 1"/><path d="M10 11h4"/><path d="M9 13.800h6.500" stroke-dasharray="2 1"/></g></svg>
<span id="t37" class="t" style="left:97.6px;top:317.97px;font-size:11px;font-weight:400;color:#000;transform-origin:left center;transform:scaleX(0.9445);">Logic Design - Single Line Diagram:Rev2</span>
<svg style="position:absolute;left:0px;top:0px;" width="1" height="1" viewBox="0 0 1 1"><path d="M88 339.5H99" stroke="#8a8a8a" stroke-width="1" stroke-dasharray="1 2" fill="none"/></svg>
<svg style="position:absolute;left:99.8px;top:332.4px;" width="16" height="16" viewBox="0 0 16 16"><g fill="#5a6db8"><rect x="0" y="0" width="4.500" height="5.500"/><rect x="0" y="8" width="4.500" height="5.500"/></g><g stroke="#8c9ad6" stroke-width=".7"><path d="M0 1.500h4.500M0 3h4.500M0 9.500h4.500M0 11h4.500"/></g><path d="M4.500 3h3v8.500h-3" fill="none" stroke="#3cb43c" stroke-width="1.300"/><path d="M7.500 7h3" stroke="#3cb43c" stroke-width="1.300"/><rect x="10.300" y="1.500" width="2.700" height="11" fill="#e2e2e2" stroke="#b9b9b9" stroke-width=".6"/></svg>
<div style="position:absolute;left:116.0px;top:331.0px;width:50px;height:15.8px;background:#3399ff"></div>
<span id="t38" class="t" style="left:116.6px;top:333.97px;font-size:11px;font-weight:400;color:#fff;transform-origin:left center;transform:scaleX(0.9646);">Diagram1</span>
<svg style="position:absolute;left:0px;top:0px;" width="1" height="1" viewBox="0 0 1 1"><path d="M74 355.5H80" stroke="#8a8a8a" stroke-width="1" stroke-dasharray="1 2" fill="none"/><rect x="64.5" y="351.5" width="8" height="8" rx=".8" fill="#fcfcfc" stroke="#9b9b9b" stroke-width="1"/><path d="M66.0 355.5h5" stroke="#2c3e93" stroke-width="1"/><path d="M68.5 353.0v5" stroke="#2c3e93" stroke-width="1"/></svg>
<svg style="position:absolute;left:80.8px;top:348.9px;" width="16" height="16" viewBox="0 0 16 16"><rect x=".3" y=".3" width="12.800" height="11.800" fill="#fbfbfb" stroke="#bdbdbd" stroke-width=".6"/><g fill="none" stroke="#111" stroke-width="1.200"><rect x="2.300" y="2.500" width="2" height="2"/><rect x="2.300" y="7.300" width="2" height="2"/><rect x="8.500" y="5" width="2" height="2"/></g><path d="M4.500 3.500h2.300v5h-2.300" fill="none" stroke="#8c9ccf" stroke-width=".8"/></svg>
<span id="t39" class="t" style="left:97.6px;top:349.97px;font-size:11px;font-weight:400;color:#000;transform-origin:left center;transform:scaleX(0.9463);">Logic Design - Single Line Diagram:Single</span>
<svg style="position:absolute;left:0px;top:0px;" width="1" height="1" viewBox="0 0 1 1"><path d="M55 371.5H61" stroke="#8a8a8a" stroke-width="1" stroke-dasharray="1 2" fill="none"/><rect x="45.5" y="367.5" width="8" height="8" rx=".8" fill="#fcfcfc" stroke="#9b9b9b" stroke-width="1"/><path d="M47.0 371.5h5" stroke="#2c3e93" stroke-width="1"/><path d="M49.5 369.0v5" stroke="#2c3e93" stroke-width="1"/></svg>
<svg style="position:absolute;left:60.8px;top:364.7px;" width="16" height="16" viewBox="0 0 16 16"><rect x=".3" y=".3" width="11.800" height="11.800" fill="#fbfbfb" stroke="#bdbdbd" stroke-width=".6"/><g fill="none" stroke="#444" stroke-width="1"><rect x="2.300" y="2.300" width="2" height="2"/><rect x="2.300" y="7" width="2" height="2"/><rect x="8" y="4.500" width="2" height="2"/></g><path d="M4.500 3.300h2v5h-2" fill="none" stroke="#8c9ccf" stroke-width=".8"/><path d="M5.500 7.300h8.300L12.300 14H3.800z" fill="#ebe453" stroke="#c3bb3a" stroke-width=".6"/></svg>
<span id="t40" class="t" style="left:78.6px;top:365.97px;font-size:11px;font-weight:400;color:#000;transform-origin:left center;transform:scaleX(0.9367);">Logic Design - Single Phase AC Loads</span>
<div style="position:absolute;left:3px;top:380.5px;width:422px;height:18.5px;background:#fff;border:1px solid #a8a8a8"></div>
<svg style="position:absolute;left:4.7px;top:402.8px;" width="18" height="4" viewBox="0 0 18 4"><path d="M0 3.600h5.800l-2.900-3.400z" fill="#000"/><path d="M11.300 .2h5.800l-2.900 3.400z" fill="#000"/></svg>
<div style="position:absolute;left:2.7px;top:406.3px;width:424.3px;height:1.3px;background:#8a8a8a"></div>
<div style="position:absolute;left:2.7px;top:428.3px;width:424.3px;height:617.5px;background:#fff"></div>
<div style="position:absolute;left:2.7px;top:1045.7px;width:420.3px;height:1.4px;background:#8a8a96"></div>
<div style="position:absolute;left:2.7px;top:1047.1px;width:424.3px;height:1.5px;background:#fff"></div>
<div style="position:absolute;left:48px;top:410.3px;width:48.400000000000006px;height:18.2px;background:linear-gradient(#f6f6f6,#e2e2e2 50%,#cfcfcf);border:1px solid #8e8e8e;border-bottom:none"></div>
<span id="t41" class="t" style="left:52.4px;top:414.27px;font-size:11px;font-weight:400;color:#000;transform-origin:left center;transform:scaleX(0.9244);">Symbols</span>
<div style="position:absolute;left:98px;top:410.3px;width:34px;height:18.2px;background:linear-gradient(#f6f6f6,#e2e2e2 50%,#cfcfcf);border:1px solid #8e8e8e;border-bottom:none"></div>
<span id="t42" class="t" style="left:102px;top:414.27px;font-size:11px;font-weight:400;color:#000;transform-origin:left center;transform:scaleX(0.9849);">Parts</span>
<div style="position:absolute;left:133.6px;top:410.3px;width:43.400000000000006px;height:18.2px;background:linear-gradient(#f6f6f6,#e2e2e2 50%,#cfcfcf);border:1px solid #8e8e8e;border-bottom:none"></div>
<span id="t43" class="t" style="left:138.3px;top:414.27px;font-size:11px;font-weight:400;color:#000;transform-origin:left center;transform:scaleX(0.9582);">Shared</span>
<div style="position:absolute;left:178.6px;top:410.3px;width:48.400000000000006px;height:18.2px;background:linear-gradient(#f6f6f6,#e2e2e2 50%,#cfcfcf);border:1px solid #8e8e8e;border-bottom:none"></div>
<span id="t44" class="t" style="left:183.3px;top:414.27px;font-size:11px;font-weight:400;color:#000;transform-origin:left center;transform:scaleX(0.9519);">Analysis</span>
<div style="position:absolute;left:228.5px;top:410.3px;width:71.5px;height:18.2px;background:linear-gradient(#f6f6f6,#e2e2e2 50%,#cfcfcf);border:1px solid #8e8e8e;border-bottom:none"></div>
<span id="t45" class="t" style="left:233px;top:414.27px;font-size:11px;font-weight:400;color:#000;transform-origin:left center;transform:scaleX(0.9001);">Audit Reports</span>
<div style="position:absolute;left:2.7px;top:428px;width:424.3px;height:1px;background:#8e8e8e"></div>
<div style="position:absolute;left:2.6px;top:408.3px;width:45px;height:21px;background:#fff;border:1px solid #8e8e8e;border-bottom:none;border-left:none"></div>
<span id="t46" class="t" style="left:8.3px;top:412.77px;font-size:11px;font-weight:400;color:#000;transform-origin:left center;transform:scaleX(0.9255);">Design</span>
<div style="position:absolute;left:4px;top:431.5px;width:419px;height:589.5px;background:#fff;border:1px solid #83838c;border-right:2px solid #7e7e8a"></div>
<svg style="position:absolute;left:0px;top:0px;" width="1" height="1" viewBox="0 0 1 1"><path d="M32.500 449v537" stroke="#8a8a8a" stroke-width="1" stroke-dasharray="1 2" fill="none"/><path d="M51.500 465v361" stroke="#8a8a8a" stroke-width="1" stroke-dasharray="1 2" fill="none"/></svg>
<svg style="position:absolute;left:0px;top:0px;" width="1" height="1" viewBox="0 0 1 1"><path d="M19 441.5H24" stroke="#8a8a8a" stroke-width="1" stroke-dasharray="1 2" fill="none"/><rect x="9.5" y="437.5" width="8" height="8" rx=".8" fill="#fcfcfc" stroke="#9b9b9b" stroke-width="1"/><path d="M11.0 441.5h5" stroke="#2c3e93" stroke-width="1"/></svg>
<svg style="position:absolute;left:23.6px;top:435.5px;" width="16" height="16" viewBox="0 0 16 16"><path d="M.5 2.200h4.500l1 1.300h5.500V5H.5z" fill="#d9d9c7" stroke="#b7b7a2" stroke-width=".5"/><path d="M2.600 1.500h12.600L12.600 12.200H.3z" fill="#ebe453" stroke="#c3bb3a" stroke-width=".7"/><path d="M3.200 2.200h11.200" stroke="#f7f3a3" stroke-width=".8"/></svg>
<span id="t47" class="t" style="left:42.7px;top:436.07px;font-size:11px;font-weight:400;color:#000;transform-origin:left center;transform:scaleX(0.9337);">Logic Design - Single Line Diagram</span>
<svg style="position:absolute;left:0px;top:0px;" width="1" height="1" viewBox="0 0 1 1"><path d="M38 457.5H43" stroke="#8a8a8a" stroke-width="1" stroke-dasharray="1 2" fill="none"/><rect x="28.5" y="453.5" width="8" height="8" rx=".8" fill="#fcfcfc" stroke="#9b9b9b" stroke-width="1"/><path d="M30.0 457.5h5" stroke="#2c3e93" stroke-width="1"/></svg>
<svg style="position:absolute;left:42.800000000000004px;top:451.5px;" width="16" height="16" viewBox="0 0 16 16"><path d="M.5 2.200h4.500l1 1.300h5.500V5H.5z" fill="#d9d9c7" stroke="#b7b7a2" stroke-width=".5"/><path d="M2.600 1.500h12.600L12.600 12.200H.3z" fill="#ebe453" stroke="#c3bb3a" stroke-width=".7"/><path d="M3.200 2.200h11.200" stroke="#f7f3a3" stroke-width=".8"/></svg>
<span id="t48" class="t" style="left:61.900000000000006px;top:452.07px;font-size:11px;font-weight:400;color:#000;transform-origin:left center;transform:scaleX(0.9508);">Devices</span>
<svg style="position:absolute;left:0px;top:0px;" width="1" height="1" viewBox="0 0 1 1"><path d="M57 473.5H63" stroke="#8a8a8a" stroke-width="1" stroke-dasharray="1 2" fill="none"/><rect x="47.5" y="469.5" width="8" height="8" rx=".8" fill="#fcfcfc" stroke="#9b9b9b" stroke-width="1"/><path d="M49.0 473.5h5" stroke="#2c3e93" stroke-width="1"/><path d="M51.5 471.0v5" stroke="#2c3e93" stroke-width="1"/></svg>
<svg style="position:absolute;left:61.599999999999994px;top:465.8px;" width="16" height="16" viewBox="0 0 16 16"><rect x="5" y="0" width="7.200" height="9.500" fill="#6670b6"/><path d="M5 1.200l1 .8-1 .8M5 3.600l1 .8-1 .8M5 6l1 .8-1 .8M12.200 1.200l-1 .8 1 .8M12.200 3.600l-1 .8 1 .8M12.200 6l-1 .8 1 .8" fill="#fff" opacity=".75"/><rect x="7.500" y="0" width="1.600" height="9.500" fill="#8791cf" opacity=".7"/><rect x=".3" y="10.300" width="2.900" height="4.300" fill="#3f4ca6"/><rect x="3.200" y="9.900" width="7" height="4.600" rx="2" fill="#dcc585" stroke="#b9a365" stroke-width=".5"/><circle cx="12.800" cy="11.600" r="3.100" fill="#fff6ea" stroke="#f68b1a" stroke-width=".9"/><path d="M10.900 11.600h3.800M12.800 9.700v3.800" stroke="#e8302a" stroke-width=".8"/></svg>
<span id="t49" class="t" style="left:81.1px;top:468.07px;font-size:11px;font-weight:400;color:#000;transform-origin:left center;transform:scaleX(0.8878);">AC_BUS_AUX</span>
<svg style="position:absolute;left:0px;top:0px;" width="1" height="1" viewBox="0 0 1 1"><path d="M57 489.5H63" stroke="#8a8a8a" stroke-width="1" stroke-dasharray="1 2" fill="none"/><rect x="47.5" y="485.5" width="8" height="8" rx=".8" fill="#fcfcfc" stroke="#9b9b9b" stroke-width="1"/><path d="M49.0 489.5h5" stroke="#2c3e93" stroke-width="1"/><path d="M51.5 487.0v5" stroke="#2c3e93" stroke-width="1"/></svg>
<svg style="position:absolute;left:61.599999999999994px;top:481.8px;" width="16" height="16" viewBox="0 0 16 16"><rect x="5" y="0" width="7.200" height="9.500" fill="#6670b6"/><path d="M5 1.200l1 .8-1 .8M5 3.600l1 .8-1 .8M5 6l1 .8-1 .8M12.200 1.200l-1 .8 1 .8M12.200 3.600l-1 .8 1 .8M12.200 6l-1 .8 1 .8" fill="#fff" opacity=".75"/><rect x="7.500" y="0" width="1.600" height="9.500" fill="#8791cf" opacity=".7"/><rect x=".3" y="10.300" width="2.900" height="4.300" fill="#3f4ca6"/><rect x="3.200" y="9.900" width="7" height="4.600" rx="2" fill="#dcc585" stroke="#b9a365" stroke-width=".5"/><circle cx="12.800" cy="11.600" r="3.100" fill="#fff6ea" stroke="#f68b1a" stroke-width=".9"/><path d="M10.900 11.600h3.800M12.800 9.700v3.800" stroke="#e8302a" stroke-width=".8"/></svg>
<span id="t50" class="t" style="left:81.1px;top:484.07px;font-size:11px;font-weight:400;color:#000;transform-origin:left center;transform:scaleX(0.8763);">AC_BUS_LEFT</span>
<svg style="position:absolute;left:0px;top:0px;" width="1" height="1" viewBox="0 0 1 1"><path d="M57 505.5H63" stroke="#8a8a8a" stroke-width="1" stroke-dasharray="1 2" fill="none"/><rect x="47.5" y="501.5" width="8" height="8" rx=".8" fill="#fcfcfc" stroke="#9b9b9b" stroke-width="1"/><path d="M49.0 505.5h5" stroke="#2c3e93" stroke-width="1"/><path d="M51.5 503.0v5" stroke="#2c3e93" stroke-width="1"/></svg>
<svg style="position:absolute;left:61.599999999999994px;top:497.8px;" width="16" height="16" viewBox="0 0 16 16"><rect x="5" y="0" width="7.200" height="9.500" fill="#6670b6"/><path d="M5 1.200l1 .8-1 .8M5 3.600l1 .8-1 .8M5 6l1 .8-1 .8M12.200 1.200l-1 .8 1 .8M12.200 3.600l-1 .8 1 .8M12.200 6l-1 .8 1 .8" fill="#fff" opacity=".75"/><rect x="7.500" y="0" width="1.600" height="9.500" fill="#8791cf" opacity=".7"/><rect x=".3" y="10.300" width="2.900" height="4.300" fill="#3f4ca6"/><rect x="3.200" y="9.900" width="7" height="4.600" rx="2" fill="#dcc585" stroke="#b9a365" stroke-width=".5"/><circle cx="12.800" cy="11.600" r="3.100" fill="#fff6ea" stroke="#f68b1a" stroke-width=".9"/><path d="M10.900 11.600h3.800M12.800 9.700v3.800" stroke="#e8302a" stroke-width=".8"/></svg>
<span id="t51" class="t" style="left:81.1px;top:500.07px;font-size:11px;font-weight:400;color:#000;transform-origin:left center;transform:scaleX(0.9009);">AC_BUS_RIGHT</span>
<svg style="position:absolute;left:0px;top:0px;" width="1" height="1" viewBox="0 0 1 1"><path d="M57 521.5H63" stroke="#8a8a8a" stroke-width="1" stroke-dasharray="1 2" fill="none"/><rect x="47.5" y="517.5" width="8" height="8" rx=".8" fill="#fcfcfc" stroke="#9b9b9b" stroke-width="1"/><path d="M49.0 521.5h5" stroke="#2c3e93" stroke-width="1"/><path d="M51.5 519.0v5" stroke="#2c3e93" stroke-width="1"/></svg>
<svg style="position:absolute;left:61.599999999999994px;top:513.8px;" width="16" height="16" viewBox="0 0 16 16"><rect x="5" y="0" width="7.200" height="9.500" fill="#6670b6"/><path d="M5 1.200l1 .8-1 .8M5 3.600l1 .8-1 .8M5 6l1 .8-1 .8M12.200 1.200l-1 .8 1 .8M12.200 3.600l-1 .8 1 .8M12.200 6l-1 .8 1 .8" fill="#fff" opacity=".75"/><rect x="7.500" y="0" width="1.600" height="9.500" fill="#8791cf" opacity=".7"/><rect x=".3" y="10.300" width="2.900" height="4.300" fill="#3f4ca6"/><rect x="3.200" y="9.900" width="7" height="4.600" rx="2" fill="#dcc585" stroke="#b9a365" stroke-width=".5"/><circle cx="12.800" cy="11.600" r="3.100" fill="#fff6ea" stroke="#f68b1a" stroke-width=".9"/><path d="M10.900 11.600h3.800M12.800 9.700v3.800" stroke="#e8302a" stroke-width=".8"/></svg>
<span id="t52" class="t" style="left:81.1px;top:516.07px;font-size:11px;font-weight:400;color:#000;transform-origin:left center;transform:scaleX(0.8980);">ADC_LEFT1</span>
<svg style="position:absolute;left:0px;top:0px;" width="1" height="1" viewBox="0 0 1 1"><path d="M57 537.5H63" stroke="#8a8a8a" stroke-width="1" stroke-dasharray="1 2" fill="none"/><rect x="47.5" y="533.5" width="8" height="8" rx=".8" fill="#fcfcfc" stroke="#9b9b9b" stroke-width="1"/><path d="M49.0 537.5h5" stroke="#2c3e93" stroke-width="1"/><path d="M51.5 535.0v5" stroke="#2c3e93" stroke-width="1"/></svg>
<svg style="position:absolute;left:61.599999999999994px;top:529.8px;" width="16" height="16" viewBox="0 0 16 16"><rect x="5" y="0" width="7.200" height="9.500" fill="#6670b6"/><path d="M5 1.200l1 .8-1 .8M5 3.600l1 .8-1 .8M5 6l1 .8-1 .8M12.200 1.200l-1 .8 1 .8M12.200 3.600l-1 .8 1 .8M12.200 6l-1 .8 1 .8" fill="#fff" opacity=".75"/><rect x="7.500" y="0" width="1.600" height="9.500" fill="#8791cf" opacity=".7"/><rect x=".3" y="10.300" width="2.900" height="4.300" fill="#3f4ca6"/><rect x="3.200" y="9.900" width="7" height="4.600" rx="2" fill="#dcc585" stroke="#b9a365" stroke-width=".5"/><circle cx="12.800" cy="11.600" r="3.100" fill="#fff6ea" stroke="#f68b1a" stroke-width=".9"/><path d="M10.900 11.600h3.800M12.800 9.700v3.800" stroke="#e8302a" stroke-width=".8"/></svg>
<span id="t53" class="t" style="left:81.1px;top:532.07px;font-size:11px;font-weight:400;color:#000;transform-origin:left center;transform:scaleX(0.9184);">ADC_RIGHT1</span>
<svg style="position:absolute;left:0px;top:0px;" width="1" height="1" viewBox="0 0 1 1"><path d="M57 553.5H63" stroke="#8a8a8a" stroke-width="1" stroke-dasharray="1 2" fill="none"/><rect x="47.5" y="549.5" width="8" height="8" rx=".8" fill="#fcfcfc" stroke="#9b9b9b" stroke-width="1"/><path d="M49.0 553.5h5" stroke="#2c3e93" stroke-width="1"/><path d="M51.5 551.0v5" stroke="#2c3e93" stroke-width="1"/></svg>
<svg style="position:absolute;left:61.599999999999994px;top:545.8px;" width="16" height="16" viewBox="0 0 16 16"><rect x="5" y="0" width="7.200" height="9.500" fill="#6670b6"/><path d="M5 1.200l1 .8-1 .8M5 3.600l1 .8-1 .8M5 6l1 .8-1 .8M12.200 1.200l-1 .8 1 .8M12.200 3.600l-1 .8 1 .8M12.200 6l-1 .8 1 .8" fill="#fff" opacity=".75"/><rect x="7.500" y="0" width="1.600" height="9.500" fill="#8791cf" opacity=".7"/><rect x=".3" y="10.300" width="2.900" height="4.300" fill="#3f4ca6"/><path d="M3.200 9.900h7.500c2.500.4 3.800 1.500 4.300 2.300-.5.900-2 2-4.300 2.300H3.200z" fill="#dcc585" stroke="#b9a365" stroke-width=".5"/></svg>
<div style="position:absolute;left:80.5px;top:545.0999999999999px;width:40px;height:15.8px;background:#3399ff"></div>
<span id="t54" class="t" style="left:81.1px;top:548.07px;font-size:11px;font-weight:400;color:#fff;transform-origin:left center;transform:scaleX(1.0327);">Battery</span>
<svg style="position:absolute;left:0px;top:0px;" width="1" height="1" viewBox="0 0 1 1"><path d="M57 569.5H63" stroke="#8a8a8a" stroke-width="1" stroke-dasharray="1 2" fill="none"/><rect x="47.5" y="565.5" width="8" height="8" rx=".8" fill="#fcfcfc" stroke="#9b9b9b" stroke-width="1"/><path d="M49.0 569.5h5" stroke="#2c3e93" stroke-width="1"/><path d="M51.5 567.0v5" stroke="#2c3e93" stroke-width="1"/></svg>
<svg style="position:absolute;left:61.599999999999994px;top:561.8px;" width="16" height="16" viewBox="0 0 16 16"><rect x="5" y="0" width="7.200" height="9.500" fill="#6670b6"/><path d="M5 1.200l1 .8-1 .8M5 3.600l1 .8-1 .8M5 6l1 .8-1 .8M12.200 1.200l-1 .8 1 .8M12.200 3.600l-1 .8 1 .8M12.200 6l-1 .8 1 .8" fill="#fff" opacity=".75"/><rect x="7.500" y="0" width="1.600" height="9.500" fill="#8791cf" opacity=".7"/><rect x=".3" y="10.300" width="2.900" height="4.300" fill="#3f4ca6"/><rect x="3.200" y="9.900" width="7" height="4.600" rx="2" fill="#dcc585" stroke="#b9a365" stroke-width=".5"/><circle cx="12.800" cy="11.600" r="3.100" fill="#fff6ea" stroke="#f68b1a" stroke-width=".9"/><path d="M10.900 11.600h3.800M12.800 9.700v3.800" stroke="#e8302a" stroke-width=".8"/></svg>
<span id="t55" class="t" style="left:81.1px;top:564.07px;font-size:11px;font-weight:400;color:#000;transform-origin:left center;transform:scaleX(0.8776);">BATTERY BUS</span>
<svg style="position:absolute;left:0px;top:0px;" width="1" height="1" viewBox="0 0 1 1"><path d="M57 585.5H63" stroke="#8a8a8a" stroke-width="1" stroke-dasharray="1 2" fill="none"/><rect x="47.5" y="581.5" width="8" height="8" rx=".8" fill="#fcfcfc" stroke="#9b9b9b" stroke-width="1"/><path d="M49.0 585.5h5" stroke="#2c3e93" stroke-width="1"/><path d="M51.5 583.0v5" stroke="#2c3e93" stroke-width="1"/></svg>
<svg style="position:absolute;left:61.599999999999994px;top:578.3px;" width="16" height="16" viewBox="0 0 16 16"><rect x="4" y="0" width="8.500" height="13" fill="#6670b6"/><rect x="7.200" y="0" width="1.800" height="13" fill="#8791cf" opacity=".7"/><path d="M2.500 2l2.200-1.600 0 3.200zM2.500 6.500l2.200-1.600 0 3.200zM2.500 11l2.200-1.600 0 3.200zM14 2l-2.200-1.600 0 3.200zM14 6.500l-2.200-1.600 0 3.200zM14 11l-2.200-1.600 0 3.200z" fill="#d6daf0"/><path d="M4 2l1.300-1 0 2zM4 6.500l1.300-1 0 2zM4 11l1.300-1 0 2zM12.500 2l-1.300-1 0 2zM12.500 6.500l-1.300-1 0 2zM12.500 11l-1.300-1 0 2z" fill="#fff"/><circle cx="12.800" cy="11.600" r="3.100" fill="#fff6ea" stroke="#f68b1a" stroke-width=".9"/><path d="M10.900 11.600h3.800M12.800 9.700v3.800" stroke="#e8302a" stroke-width=".8"/></svg>
<span id="t56" class="t" style="left:81.1px;top:580.07px;font-size:11px;font-weight:400;color:#000;transform-origin:left center;transform:scaleX(0.9766);">Control_Condition</span>
<svg style="position:absolute;left:0px;top:0px;" width="1" height="1" viewBox="0 0 1 1"><path d="M57 601.5H63" stroke="#8a8a8a" stroke-width="1" stroke-dasharray="1 2" fill="none"/><rect x="47.5" y="597.5" width="8" height="8" rx=".8" fill="#fcfcfc" stroke="#9b9b9b" stroke-width="1"/><path d="M49.0 601.5h5" stroke="#2c3e93" stroke-width="1"/><path d="M51.5 599.0v5" stroke="#2c3e93" stroke-width="1"/></svg>
<svg style="position:absolute;left:61.599999999999994px;top:593.8px;" width="16" height="16" viewBox="0 0 16 16"><rect x="5" y="0" width="7.200" height="9.500" fill="#6670b6"/><path d="M5 1.200l1 .8-1 .8M5 3.600l1 .8-1 .8M5 6l1 .8-1 .8M12.200 1.200l-1 .8 1 .8M12.200 3.600l-1 .8 1 .8M12.200 6l-1 .8 1 .8" fill="#fff" opacity=".75"/><rect x="7.500" y="0" width="1.600" height="9.500" fill="#8791cf" opacity=".7"/><rect x=".3" y="10.300" width="2.900" height="4.300" fill="#3f4ca6"/><rect x="3.200" y="9.900" width="7" height="4.600" rx="2" fill="#dcc585" stroke="#b9a365" stroke-width=".5"/><circle cx="12.800" cy="11.600" r="3.100" fill="#fff6ea" stroke="#f68b1a" stroke-width=".9"/><path d="M10.900 11.600h3.800M12.800 9.700v3.800" stroke="#e8302a" stroke-width=".8"/></svg>
<span id="t57" class="t" style="left:81.1px;top:596.07px;font-size:11px;font-weight:400;color:#000;transform-origin:left center;transform:scaleX(0.8694);">DC_BUS_LEFT</span>
<svg style="position:absolute;left:0px;top:0px;" width="1" height="1" viewBox="0 0 1 1"><path d="M57 617.5H63" stroke="#8a8a8a" stroke-width="1" stroke-dasharray="1 2" fill="none"/><rect x="47.5" y="613.5" width="8" height="8" rx=".8" fill="#fcfcfc" stroke="#9b9b9b" stroke-width="1"/><path d="M49.0 617.5h5" stroke="#2c3e93" stroke-width="1"/><path d="M51.5 615.0v5" stroke="#2c3e93" stroke-width="1"/></svg>
<svg style="position:absolute;left:61.599999999999994px;top:609.8px;" width="16" height="16" viewBox="0 0 16 16"><rect x="5" y="0" width="7.200" height="9.500" fill="#6670b6"/><path d="M5 1.200l1 .8-1 .8M5 3.600l1 .8-1 .8M5 6l1 .8-1 .8M12.200 1.200l-1 .8 1 .8M12.200 3.600l-1 .8 1 .8M12.200 6l-1 .8 1 .8" fill="#fff" opacity=".75"/><rect x="7.500" y="0" width="1.600" height="9.500" fill="#8791cf" opacity=".7"/><rect x=".3" y="10.300" width="2.900" height="4.300" fill="#3f4ca6"/><rect x="3.200" y="9.900" width="7" height="4.600" rx="2" fill="#dcc585" stroke="#b9a365" stroke-width=".5"/><circle cx="12.800" cy="11.600" r="3.100" fill="#fff6ea" stroke="#f68b1a" stroke-width=".9"/><path d="M10.900 11.600h3.800M12.800 9.700v3.800" stroke="#e8302a" stroke-width=".8"/></svg>
<span id="t58" class="t" style="left:81.1px;top:612.07px;font-size:11px;font-weight:400;color:#000;transform-origin:left center;transform:scaleX(0.8944);">DC_BUS_RIGHT</span>
<svg style="position:absolute;left:0px;top:0px;" width="1" height="1" viewBox="0 0 1 1"><path d="M57 633.5H63" stroke="#8a8a8a" stroke-width="1" stroke-dasharray="1 2" fill="none"/><rect x="47.5" y="629.5" width="8" height="8" rx=".8" fill="#fcfcfc" stroke="#9b9b9b" stroke-width="1"/><path d="M49.0 633.5h5" stroke="#2c3e93" stroke-width="1"/><path d="M51.5 631.0v5" stroke="#2c3e93" stroke-width="1"/></svg>
<svg style="position:absolute;left:61.599999999999994px;top:625.8px;" width="16" height="16" viewBox="0 0 16 16"><rect x="5" y="0" width="7.200" height="9.500" fill="#6670b6"/><path d="M5 1.200l1 .8-1 .8M5 3.600l1 .8-1 .8M5 6l1 .8-1 .8M12.200 1.200l-1 .8 1 .8M12.200 3.600l-1 .8 1 .8M12.200 6l-1 .8 1 .8" fill="#fff" opacity=".75"/><rect x="7.500" y="0" width="1.600" height="9.500" fill="#8791cf" opacity=".7"/><rect x=".3" y="10.300" width="2.900" height="4.300" fill="#3f4ca6"/><rect x="3.200" y="9.900" width="7" height="4.600" rx="2" fill="#dcc585" stroke="#b9a365" stroke-width=".5"/><circle cx="12.800" cy="11.600" r="3.100" fill="#fff6ea" stroke="#f68b1a" stroke-width=".9"/><path d="M10.900 11.600h3.800M12.800 9.700v3.800" stroke="#e8302a" stroke-width=".8"/></svg>
<span id="t59" class="t" style="left:81.1px;top:628.07px;font-size:11px;font-weight:400;color:#000;transform-origin:left center;transform:scaleX(0.8530);">GEN_LEFT</span>
<svg style="position:absolute;left:0px;top:0px;" width="1" height="1" viewBox="0 0 1 1"><path d="M57 649.5H63" stroke="#8a8a8a" stroke-width="1" stroke-dasharray="1 2" fill="none"/><rect x="47.5" y="645.5" width="8" height="8" rx=".8" fill="#fcfcfc" stroke="#9b9b9b" stroke-width="1"/><path d="M49.0 649.5h5" stroke="#2c3e93" stroke-width="1"/><path d="M51.5 647.0v5" stroke="#2c3e93" stroke-width="1"/></svg>
<svg style="position:absolute;left:61.599999999999994px;top:641.8px;" width="16" height="16" viewBox="0 0 16 16"><rect x="5" y="0" width="7.200" height="9.500" fill="#6670b6"/><path d="M5 1.200l1 .8-1 .8M5 3.600l1 .8-1 .8M5 6l1 .8-1 .8M12.200 1.200l-1 .8 1 .8M12.200 3.600l-1 .8 1 .8M12.200 6l-1 .8 1 .8" fill="#fff" opacity=".75"/><rect x="7.500" y="0" width="1.600" height="9.500" fill="#8791cf" opacity=".7"/><rect x=".3" y="10.300" width="2.900" height="4.300" fill="#3f4ca6"/><rect x="3.200" y="9.900" width="7" height="4.600" rx="2" fill="#dcc585" stroke="#b9a365" stroke-width=".5"/><circle cx="12.800" cy="11.600" r="3.100" fill="#fff6ea" stroke="#f68b1a" stroke-width=".9"/><path d="M10.900 11.600h3.800M12.800 9.700v3.800" stroke="#e8302a" stroke-width=".8"/></svg>
<span id="t60" class="t" style="left:81.1px;top:644.07px;font-size:11px;font-weight:400;color:#000;transform-origin:left center;transform:scaleX(0.8880);">GEN_RIGHT</span>
<svg style="position:absolute;left:0px;top:0px;" width="1" height="1" viewBox="0 0 1 1"><path d="M57 665.5H63" stroke="#8a8a8a" stroke-width="1" stroke-dasharray="1 2" fill="none"/><rect x="47.5" y="661.5" width="8" height="8" rx=".8" fill="#fcfcfc" stroke="#9b9b9b" stroke-width="1"/><path d="M49.0 665.5h5" stroke="#2c3e93" stroke-width="1"/><path d="M51.5 663.0v5" stroke="#2c3e93" stroke-width="1"/></svg>
<svg style="position:absolute;left:61.599999999999994px;top:657.8px;" width="16" height="16" viewBox="0 0 16 16"><path d="M7 0v7.500M1 7.500h12M3.500 10h7M5.500 12.500h3" stroke="#111" stroke-width="1.300" fill="none"/><circle cx="12.800" cy="11.600" r="3.100" fill="#fff6ea" stroke="#f68b1a" stroke-width=".9"/><path d="M10.900 11.600h3.800M12.800 9.700v3.800" stroke="#e8302a" stroke-width=".8"/></svg>
<span id="t61" class="t" style="left:81.1px;top:660.07px;font-size:11px;font-weight:400;color:#000;transform-origin:left center;transform:scaleX(0.9198);">GND1000</span>
<svg style="position:absolute;left:0px;top:0px;" width="1" height="1" viewBox="0 0 1 1"><path d="M57 681.5H63" stroke="#8a8a8a" stroke-width="1" stroke-dasharray="1 2" fill="none"/><rect x="47.5" y="677.5" width="8" height="8" rx=".8" fill="#fcfcfc" stroke="#9b9b9b" stroke-width="1"/><path d="M49.0 681.5h5" stroke="#2c3e93" stroke-width="1"/><path d="M51.5 679.0v5" stroke="#2c3e93" stroke-width="1"/></svg>
<svg style="position:absolute;left:61.599999999999994px;top:673.8px;" width="16" height="16" viewBox="0 0 16 16"><rect x="5" y="0" width="7.200" height="9.500" fill="#6670b6"/><path d="M5 1.200l1 .8-1 .8M5 3.600l1 .8-1 .8M5 6l1 .8-1 .8M12.200 1.200l-1 .8 1 .8M12.200 3.600l-1 .8 1 .8M12.200 6l-1 .8 1 .8" fill="#fff" opacity=".75"/><rect x="7.500" y="0" width="1.600" height="9.500" fill="#8791cf" opacity=".7"/><rect x=".3" y="10.300" width="2.900" height="4.300" fill="#3f4ca6"/><rect x="3.200" y="9.900" width="7" height="4.600" rx="2" fill="#dcc585" stroke="#b9a365" stroke-width=".5"/><circle cx="12.800" cy="11.600" r="3.100" fill="#fff6ea" stroke="#f68b1a" stroke-width=".9"/><path d="M10.900 11.600h3.800M12.800 9.700v3.800" stroke="#e8302a" stroke-width=".8"/></svg>
<span id="t62" class="t" style="left:81.1px;top:676.07px;font-size:11px;font-weight:400;color:#000;transform-origin:left center;transform:scaleX(0.8817);">GROUND_SOURCE</span>
<svg style="position:absolute;left:0px;top:0px;" width="1" height="1" viewBox="0 0 1 1"><path d="M57 697.5H63" stroke="#8a8a8a" stroke-width="1" stroke-dasharray="1 2" fill="none"/><rect x="47.5" y="693.5" width="8" height="8" rx=".8" fill="#fcfcfc" stroke="#9b9b9b" stroke-width="1"/><path d="M49.0 697.5h5" stroke="#2c3e93" stroke-width="1"/><path d="M51.5 695.0v5" stroke="#2c3e93" stroke-width="1"/></svg>
<svg style="position:absolute;left:61.599999999999994px;top:689.8px;" width="16" height="16" viewBox="0 0 16 16"><rect x="5" y="0" width="7.200" height="9.500" fill="#6670b6"/><path d="M5 1.200l1 .8-1 .8M5 3.600l1 .8-1 .8M5 6l1 .8-1 .8M12.200 1.200l-1 .8 1 .8M12.200 3.600l-1 .8 1 .8M12.200 6l-1 .8 1 .8" fill="#fff" opacity=".75"/><rect x="7.500" y="0" width="1.600" height="9.500" fill="#8791cf" opacity=".7"/><rect x=".3" y="10.300" width="2.900" height="4.300" fill="#3f4ca6"/><rect x="3.200" y="9.900" width="7" height="4.600" rx="2" fill="#dcc585" stroke="#b9a365" stroke-width=".5"/><circle cx="12.800" cy="11.600" r="3.100" fill="#fff6ea" stroke="#f68b1a" stroke-width=".9"/><path d="M10.900 11.600h3.800M12.800 9.700v3.800" stroke="#e8302a" stroke-width=".8"/></svg>
<span id="t63" class="t" style="left:81.1px;top:692.07px;font-size:11px;font-weight:400;color:#000;transform-origin:left center;transform:scaleX(1.0591);">Invertor</span>
<svg style="position:absolute;left:0px;top:0px;" width="1" height="1" viewBox="0 0 1 1"><path d="M57 713.5H63" stroke="#8a8a8a" stroke-width="1" stroke-dasharray="1 2" fill="none"/><rect x="47.5" y="709.5" width="8" height="8" rx=".8" fill="#fcfcfc" stroke="#9b9b9b" stroke-width="1"/><path d="M49.0 713.5h5" stroke="#2c3e93" stroke-width="1"/><path d="M51.5 711.0v5" stroke="#2c3e93" stroke-width="1"/></svg>
<svg style="position:absolute;left:61.599999999999994px;top:705.8px;" width="16" height="16" viewBox="0 0 16 16"><rect x="5" y="0" width="7.200" height="9.500" fill="#6670b6"/><path d="M5 1.200l1 .8-1 .8M5 3.600l1 .8-1 .8M5 6l1 .8-1 .8M12.200 1.200l-1 .8 1 .8M12.200 3.600l-1 .8 1 .8M12.200 6l-1 .8 1 .8" fill="#fff" opacity=".75"/><rect x="7.500" y="0" width="1.600" height="9.500" fill="#8791cf" opacity=".7"/><rect x=".3" y="10.300" width="2.900" height="4.300" fill="#3f4ca6"/><rect x="3.200" y="9.900" width="7" height="4.600" rx="2" fill="#dcc585" stroke="#b9a365" stroke-width=".5"/><circle cx="12.800" cy="11.600" r="3.100" fill="#fff6ea" stroke="#f68b1a" stroke-width=".9"/><path d="M10.900 11.600h3.800M12.800 9.700v3.800" stroke="#e8302a" stroke-width=".8"/></svg>
<span id="t64" class="t" style="left:81.1px;top:708.07px;font-size:11px;font-weight:400;color:#000;transform-origin:left center;transform:scaleX(0.8898);">SW_AUX_GEN</span>
<svg style="position:absolute;left:0px;top:0px;" width="1" height="1" viewBox="0 0 1 1"><path d="M57 729.5H63" stroke="#8a8a8a" stroke-width="1" stroke-dasharray="1 2" fill="none"/><rect x="47.5" y="725.5" width="8" height="8" rx=".8" fill="#fcfcfc" stroke="#9b9b9b" stroke-width="1"/><path d="M49.0 729.5h5" stroke="#2c3e93" stroke-width="1"/><path d="M51.5 727.0v5" stroke="#2c3e93" stroke-width="1"/></svg>
<svg style="position:absolute;left:61.599999999999994px;top:721.8px;" width="16" height="16" viewBox="0 0 16 16"><rect x="5" y="0" width="7.200" height="9.500" fill="#6670b6"/><path d="M5 1.200l1 .8-1 .8M5 3.600l1 .8-1 .8M5 6l1 .8-1 .8M12.200 1.200l-1 .8 1 .8M12.200 3.600l-1 .8 1 .8M12.200 6l-1 .8 1 .8" fill="#fff" opacity=".75"/><rect x="7.500" y="0" width="1.600" height="9.500" fill="#8791cf" opacity=".7"/><rect x=".3" y="10.300" width="2.900" height="4.300" fill="#3f4ca6"/><rect x="3.200" y="9.900" width="7" height="4.600" rx="2" fill="#dcc585" stroke="#b9a365" stroke-width=".5"/><circle cx="12.800" cy="11.600" r="3.100" fill="#fff6ea" stroke="#f68b1a" stroke-width=".9"/><path d="M10.900 11.600h3.800M12.800 9.700v3.800" stroke="#e8302a" stroke-width=".8"/></svg>
<span id="t65" class="t" style="left:81.1px;top:724.07px;font-size:11px;font-weight:400;color:#000;transform-origin:left center;transform:scaleX(0.8871);">SW_AUX_LEFT</span>
<svg style="position:absolute;left:0px;top:0px;" width="1" height="1" viewBox="0 0 1 1"><path d="M57 745.5H63" stroke="#8a8a8a" stroke-width="1" stroke-dasharray="1 2" fill="none"/><rect x="47.5" y="741.5" width="8" height="8" rx=".8" fill="#fcfcfc" stroke="#9b9b9b" stroke-width="1"/><path d="M49.0 745.5h5" stroke="#2c3e93" stroke-width="1"/><path d="M51.5 743.0v5" stroke="#2c3e93" stroke-width="1"/></svg>
<svg style="position:absolute;left:61.599999999999994px;top:737.8px;" width="16" height="16" viewBox="0 0 16 16"><rect x="5" y="0" width="7.200" height="9.500" fill="#6670b6"/><path d="M5 1.200l1 .8-1 .8M5 3.600l1 .8-1 .8M5 6l1 .8-1 .8M12.200 1.200l-1 .8 1 .8M12.200 3.600l-1 .8 1 .8M12.200 6l-1 .8 1 .8" fill="#fff" opacity=".75"/><rect x="7.500" y="0" width="1.600" height="9.500" fill="#8791cf" opacity=".7"/><rect x=".3" y="10.300" width="2.900" height="4.300" fill="#3f4ca6"/><rect x="3.200" y="9.900" width="7" height="4.600" rx="2" fill="#dcc585" stroke="#b9a365" stroke-width=".5"/><circle cx="12.800" cy="11.600" r="3.100" fill="#fff6ea" stroke="#f68b1a" stroke-width=".9"/><path d="M10.900 11.600h3.800M12.800 9.700v3.800" stroke="#e8302a" stroke-width=".8"/></svg>
<span id="t66" class="t" style="left:81.1px;top:740.07px;font-size:11px;font-weight:400;color:#000;transform-origin:left center;transform:scaleX(0.9102);">SW_AUX_RIGHT</span>
<svg style="position:absolute;left:0px;top:0px;" width="1" height="1" viewBox="0 0 1 1"><path d="M57 761.5H63" stroke="#8a8a8a" stroke-width="1" stroke-dasharray="1 2" fill="none"/><rect x="47.5" y="757.5" width="8" height="8" rx=".8" fill="#fcfcfc" stroke="#9b9b9b" stroke-width="1"/><path d="M49.0 761.5h5" stroke="#2c3e93" stroke-width="1"/><path d="M51.5 759.0v5" stroke="#2c3e93" stroke-width="1"/></svg>
<svg style="position:absolute;left:61.599999999999994px;top:753.8px;" width="16" height="16" viewBox="0 0 16 16"><rect x="5" y="0" width="7.200" height="9.500" fill="#6670b6"/><path d="M5 1.200l1 .8-1 .8M5 3.600l1 .8-1 .8M5 6l1 .8-1 .8M12.200 1.200l-1 .8 1 .8M12.200 3.600l-1 .8 1 .8M12.200 6l-1 .8 1 .8" fill="#fff" opacity=".75"/><rect x="7.500" y="0" width="1.600" height="9.500" fill="#8791cf" opacity=".7"/><rect x=".3" y="10.300" width="2.900" height="4.300" fill="#3f4ca6"/><rect x="3.200" y="9.900" width="7" height="4.600" rx="2" fill="#dcc585" stroke="#b9a365" stroke-width=".5"/><circle cx="12.800" cy="11.600" r="3.100" fill="#fff6ea" stroke="#f68b1a" stroke-width=".9"/><path d="M10.900 11.600h3.800M12.800 9.700v3.800" stroke="#e8302a" stroke-width=".8"/></svg>
<span id="t67" class="t" style="left:81.1px;top:756.07px;font-size:11px;font-weight:400;color:#000;transform-origin:left center;transform:scaleX(0.9092);">SW_BATT_DC</span>
<svg style="position:absolute;left:0px;top:0px;" width="1" height="1" viewBox="0 0 1 1"><path d="M57 777.5H63" stroke="#8a8a8a" stroke-width="1" stroke-dasharray="1 2" fill="none"/><rect x="47.5" y="773.5" width="8" height="8" rx=".8" fill="#fcfcfc" stroke="#9b9b9b" stroke-width="1"/><path d="M49.0 777.5h5" stroke="#2c3e93" stroke-width="1"/><path d="M51.5 775.0v5" stroke="#2c3e93" stroke-width="1"/></svg>
<svg style="position:absolute;left:61.599999999999994px;top:769.8px;" width="16" height="16" viewBox="0 0 16 16"><rect x="5" y="0" width="7.200" height="9.500" fill="#6670b6"/><path d="M5 1.200l1 .8-1 .8M5 3.600l1 .8-1 .8M5 6l1 .8-1 .8M12.200 1.200l-1 .8 1 .8M12.200 3.600l-1 .8 1 .8M12.200 6l-1 .8 1 .8" fill="#fff" opacity=".75"/><rect x="7.500" y="0" width="1.600" height="9.500" fill="#8791cf" opacity=".7"/><rect x=".3" y="10.300" width="2.900" height="4.300" fill="#3f4ca6"/><rect x="3.200" y="9.900" width="7" height="4.600" rx="2" fill="#dcc585" stroke="#b9a365" stroke-width=".5"/><circle cx="12.800" cy="11.600" r="3.100" fill="#fff6ea" stroke="#f68b1a" stroke-width=".9"/><path d="M10.900 11.600h3.800M12.800 9.700v3.800" stroke="#e8302a" stroke-width=".8"/></svg>
<span id="t68" class="t" style="left:81.1px;top:772.07px;font-size:11px;font-weight:400;color:#000;transform-origin:left center;transform:scaleX(0.8866);">SW_DC_LEFT</span>
<svg style="position:absolute;left:0px;top:0px;" width="1" height="1" viewBox="0 0 1 1"><path d="M57 793.5H63" stroke="#8a8a8a" stroke-width="1" stroke-dasharray="1 2" fill="none"/><rect x="47.5" y="789.5" width="8" height="8" rx=".8" fill="#fcfcfc" stroke="#9b9b9b" stroke-width="1"/><path d="M49.0 793.5h5" stroke="#2c3e93" stroke-width="1"/><path d="M51.5 791.0v5" stroke="#2c3e93" stroke-width="1"/></svg>
<svg style="position:absolute;left:61.599999999999994px;top:785.8px;" width="16" height="16" viewBox="0 0 16 16"><rect x="5" y="0" width="7.200" height="9.500" fill="#6670b6"/><path d="M5 1.200l1 .8-1 .8M5 3.600l1 .8-1 .8M5 6l1 .8-1 .8M12.200 1.200l-1 .8 1 .8M12.200 3.600l-1 .8 1 .8M12.200 6l-1 .8 1 .8" fill="#fff" opacity=".75"/><rect x="7.500" y="0" width="1.600" height="9.500" fill="#8791cf" opacity=".7"/><rect x=".3" y="10.300" width="2.900" height="4.300" fill="#3f4ca6"/><rect x="3.200" y="9.900" width="7" height="4.600" rx="2" fill="#dcc585" stroke="#b9a365" stroke-width=".5"/><circle cx="12.800" cy="11.600" r="3.100" fill="#fff6ea" stroke="#f68b1a" stroke-width=".9"/><path d="M10.900 11.600h3.800M12.800 9.700v3.800" stroke="#e8302a" stroke-width=".8"/></svg>
<span id="t69" class="t" style="left:81.1px;top:788.07px;font-size:11px;font-weight:400;color:#000;transform-origin:left center;transform:scaleX(0.9118);">SW_DC_RIGHT</span>
<svg style="position:absolute;left:0px;top:0px;" width="1" height="1" viewBox="0 0 1 1"><path d="M57 809.5H63" stroke="#8a8a8a" stroke-width="1" stroke-dasharray="1 2" fill="none"/><rect x="47.5" y="805.5" width="8" height="8" rx=".8" fill="#fcfcfc" stroke="#9b9b9b" stroke-width="1"/><path d="M49.0 809.5h5" stroke="#2c3e93" stroke-width="1"/><path d="M51.5 807.0v5" stroke="#2c3e93" stroke-width="1"/></svg>
<svg style="position:absolute;left:61.599999999999994px;top:801.8px;" width="16" height="16" viewBox="0 0 16 16"><rect x="5" y="0" width="7.200" height="9.500" fill="#6670b6"/><path d="M5 1.200l1 .8-1 .8M5 3.600l1 .8-1 .8M5 6l1 .8-1 .8M12.200 1.200l-1 .8 1 .8M12.200 3.600l-1 .8 1 .8M12.200 6l-1 .8 1 .8" fill="#fff" opacity=".75"/><rect x="7.500" y="0" width="1.600" height="9.500" fill="#8791cf" opacity=".7"/><rect x=".3" y="10.300" width="2.900" height="4.300" fill="#3f4ca6"/><rect x="3.200" y="9.900" width="7" height="4.600" rx="2" fill="#dcc585" stroke="#b9a365" stroke-width=".5"/><circle cx="12.800" cy="11.600" r="3.100" fill="#fff6ea" stroke="#f68b1a" stroke-width=".9"/><path d="M10.900 11.600h3.800M12.800 9.700v3.800" stroke="#e8302a" stroke-width=".8"/></svg>
<span id="t70" class="t" style="left:81.1px;top:804.07px;font-size:11px;font-weight:400;color:#000;transform-origin:left center;transform:scaleX(0.8737);">SW_GEN_LEFT</span>
<svg style="position:absolute;left:0px;top:0px;" width="1" height="1" viewBox="0 0 1 1"><path d="M57 825.5H63" stroke="#8a8a8a" stroke-width="1" stroke-dasharray="1 2" fill="none"/><rect x="47.5" y="821.5" width="8" height="8" rx=".8" fill="#fcfcfc" stroke="#9b9b9b" stroke-width="1"/><path d="M49.0 825.5h5" stroke="#2c3e93" stroke-width="1"/><path d="M51.5 823.0v5" stroke="#2c3e93" stroke-width="1"/></svg>
<svg style="position:absolute;left:61.599999999999994px;top:817.8px;" width="16" height="16" viewBox="0 0 16 16"><rect x="5" y="0" width="7.200" height="9.500" fill="#6670b6"/><path d="M5 1.200l1 .8-1 .8M5 3.600l1 .8-1 .8M5 6l1 .8-1 .8M12.200 1.200l-1 .8 1 .8M12.200 3.600l-1 .8 1 .8M12.200 6l-1 .8 1 .8" fill="#fff" opacity=".75"/><rect x="7.500" y="0" width="1.600" height="9.500" fill="#8791cf" opacity=".7"/><rect x=".3" y="10.300" width="2.900" height="4.300" fill="#3f4ca6"/><rect x="3.200" y="9.900" width="7" height="4.600" rx="2" fill="#dcc585" stroke="#b9a365" stroke-width=".5"/><circle cx="12.800" cy="11.600" r="3.100" fill="#fff6ea" stroke="#f68b1a" stroke-width=".9"/><path d="M10.900 11.600h3.800M12.800 9.700v3.800" stroke="#e8302a" stroke-width=".8"/></svg>
<span id="t71" class="t" style="left:81.1px;top:820.07px;font-size:11px;font-weight:400;color:#000;transform-origin:left center;transform:scaleX(0.8976);">SW_GEN_RIGHT</span>
<svg style="position:absolute;left:0px;top:0px;" width="1" height="1" viewBox="0 0 1 1"><path d="M33 841.5H43" stroke="#8a8a8a" stroke-width="1" stroke-dasharray="1 2" fill="none"/></svg>
<svg style="position:absolute;left:42.800000000000004px;top:835.5px;" width="16" height="16" viewBox="0 0 16 16"><path d="M.5 2.200h4.500l1 1.300h5.500V5H.5z" fill="#d9d9c7" stroke="#b7b7a2" stroke-width=".5"/><path d="M2.600 1.500h12.600L12.600 12.200H.3z" fill="#ebe453" stroke="#c3bb3a" stroke-width=".7"/><path d="M3.200 2.200h11.200" stroke="#f7f3a3" stroke-width=".8"/></svg>
<span id="t72" class="t" style="left:61.900000000000006px;top:836.07px;font-size:11px;font-weight:400;color:#000;transform-origin:left center;transform:scaleX(0.9775);">Connectors</span>
<svg style="position:absolute;left:0px;top:0px;" width="1" height="1" viewBox="0 0 1 1"><path d="M33 857.5H43" stroke="#8a8a8a" stroke-width="1" stroke-dasharray="1 2" fill="none"/></svg>
<svg style="position:absolute;left:42.800000000000004px;top:851.5px;" width="16" height="16" viewBox="0 0 16 16"><path d="M.5 2.200h4.500l1 1.300h5.500V5H.5z" fill="#d9d9c7" stroke="#b7b7a2" stroke-width=".5"/><path d="M2.600 1.500h12.600L12.600 12.200H.3z" fill="#ebe453" stroke="#c3bb3a" stroke-width=".7"/><path d="M3.200 2.200h11.200" stroke="#f7f3a3" stroke-width=".8"/></svg>
<span id="t73" class="t" style="left:61.900000000000006px;top:852.07px;font-size:11px;font-weight:400;color:#000;transform-origin:left center;transform:scaleX(0.9103);">Blocks</span>
<svg style="position:absolute;left:0px;top:0px;" width="1" height="1" viewBox="0 0 1 1"><path d="M33 873.5H43" stroke="#8a8a8a" stroke-width="1" stroke-dasharray="1 2" fill="none"/></svg>
<svg style="position:absolute;left:42.800000000000004px;top:867.5px;" width="16" height="16" viewBox="0 0 16 16"><path d="M.5 2.200h4.500l1 1.300h5.500V5H.5z" fill="#d9d9c7" stroke="#b7b7a2" stroke-width=".5"/><path d="M2.600 1.500h12.600L12.600 12.200H.3z" fill="#ebe453" stroke="#c3bb3a" stroke-width=".7"/><path d="M3.200 2.200h11.200" stroke="#f7f3a3" stroke-width=".8"/></svg>
<span id="t74" class="t" style="left:61.900000000000006px;top:868.07px;font-size:11px;font-weight:400;color:#000;transform-origin:left center;transform:scaleX(0.9907);">Inlines</span>
<svg style="position:absolute;left:0px;top:0px;" width="1" height="1" viewBox="0 0 1 1"><path d="M33 889.5H43" stroke="#8a8a8a" stroke-width="1" stroke-dasharray="1 2" fill="none"/></svg>
<svg style="position:absolute;left:42.800000000000004px;top:883.5px;" width="16" height="16" viewBox="0 0 16 16"><path d="M.5 2.200h4.500l1 1.300h5.500V5H.5z" fill="#d9d9c7" stroke="#b7b7a2" stroke-width=".5"/><path d="M2.600 1.500h12.600L12.600 12.200H.3z" fill="#ebe453" stroke="#c3bb3a" stroke-width=".7"/><path d="M3.200 2.200h11.200" stroke="#f7f3a3" stroke-width=".8"/></svg>
<span id="t75" class="t" style="left:61.900000000000006px;top:884.07px;font-size:11px;font-weight:400;color:#000;transform-origin:left center;transform:scaleX(0.9163);">Splices</span>
<svg style="position:absolute;left:0px;top:0px;" width="1" height="1" viewBox="0 0 1 1"><path d="M33 905.5H43" stroke="#8a8a8a" stroke-width="1" stroke-dasharray="1 2" fill="none"/></svg>
<svg style="position:absolute;left:42.800000000000004px;top:899.5px;" width="16" height="16" viewBox="0 0 16 16"><path d="M.5 2.200h4.500l1 1.300h5.500V5H.5z" fill="#d9d9c7" stroke="#b7b7a2" stroke-width=".5"/><path d="M2.600 1.500h12.600L12.600 12.200H.3z" fill="#ebe453" stroke="#c3bb3a" stroke-width=".7"/><path d="M3.200 2.200h11.200" stroke="#f7f3a3" stroke-width=".8"/></svg>
<span id="t76" class="t" style="left:61.900000000000006px;top:900.07px;font-size:11px;font-weight:400;color:#000;transform-origin:left center;transform:scaleX(0.9578);">Ring Terminals</span>
<svg style="position:absolute;left:0px;top:0px;" width="1" height="1" viewBox="0 0 1 1"><path d="M38 921.5H43" stroke="#8a8a8a" stroke-width="1" stroke-dasharray="1 2" fill="none"/><rect x="28.5" y="917.5" width="8" height="8" rx=".8" fill="#fcfcfc" stroke="#9b9b9b" stroke-width="1"/><path d="M30.0 921.5h5" stroke="#2c3e93" stroke-width="1"/><path d="M32.5 919.0v5" stroke="#2c3e93" stroke-width="1"/></svg>
<svg style="position:absolute;left:42.800000000000004px;top:915.5px;" width="16" height="16" viewBox="0 0 16 16"><path d="M.5 2.200h4.500l1 1.300h5.500V5H.5z" fill="#d9d9c7" stroke="#b7b7a2" stroke-width=".5"/><path d="M2.600 1.500h12.600L12.600 12.200H.3z" fill="#ebe453" stroke="#c3bb3a" stroke-width=".7"/><path d="M3.200 2.200h11.200" stroke="#f7f3a3" stroke-width=".8"/></svg>
<span id="t77" class="t" style="left:61.900000000000006px;top:916.07px;font-size:11px;font-weight:400;color:#000;transform-origin:left center;transform:scaleX(0.9864);">Conductors</span>
<svg style="position:absolute;left:0px;top:0px;" width="1" height="1" viewBox="0 0 1 1"><path d="M33 937.5H43" stroke="#8a8a8a" stroke-width="1" stroke-dasharray="1 2" fill="none"/></svg>
<svg style="position:absolute;left:42.800000000000004px;top:931.5px;" width="16" height="16" viewBox="0 0 16 16"><path d="M.5 2.200h4.500l1 1.300h5.500V5H.5z" fill="#d9d9c7" stroke="#b7b7a2" stroke-width=".5"/><path d="M2.600 1.500h12.600L12.600 12.200H.3z" fill="#ebe453" stroke="#c3bb3a" stroke-width=".7"/><path d="M3.200 2.200h11.200" stroke="#f7f3a3" stroke-width=".8"/></svg>
<span id="t78" class="t" style="left:61.900000000000006px;top:932.07px;font-size:11px;font-weight:400;color:#000;transform-origin:left center;transform:scaleX(0.9676);">Multicores</span>
<svg style="position:absolute;left:0px;top:0px;" width="1" height="1" viewBox="0 0 1 1"><path d="M33 953.5H43" stroke="#8a8a8a" stroke-width="1" stroke-dasharray="1 2" fill="none"/></svg>
<svg style="position:absolute;left:42.800000000000004px;top:947.5px;" width="16" height="16" viewBox="0 0 16 16"><path d="M.5 2.200h4.500l1 1.300h5.500V5H.5z" fill="#d9d9c7" stroke="#b7b7a2" stroke-width=".5"/><path d="M2.600 1.500h12.600L12.600 12.200H.3z" fill="#ebe453" stroke="#c3bb3a" stroke-width=".7"/><path d="M3.200 2.200h11.200" stroke="#f7f3a3" stroke-width=".8"/></svg>
<span id="t79" class="t" style="left:61.900000000000006px;top:948.07px;font-size:11px;font-weight:400;color:#000;transform-origin:left center;transform:scaleX(0.9945);">Overbraids</span>
<svg style="position:absolute;left:0px;top:0px;" width="1" height="1" viewBox="0 0 1 1"><path d="M38 969.5H43" stroke="#8a8a8a" stroke-width="1" stroke-dasharray="1 2" fill="none"/><rect x="28.5" y="965.5" width="8" height="8" rx=".8" fill="#fcfcfc" stroke="#9b9b9b" stroke-width="1"/><path d="M30.0 969.5h5" stroke="#2c3e93" stroke-width="1"/><path d="M32.5 967.0v5" stroke="#2c3e93" stroke-width="1"/></svg>
<svg style="position:absolute;left:42.800000000000004px;top:963.5px;" width="16" height="16" viewBox="0 0 16 16"><path d="M.5 2.200h4.500l1 1.300h5.500V5H.5z" fill="#d9d9c7" stroke="#b7b7a2" stroke-width=".5"/><path d="M2.600 1.500h12.600L12.600 12.200H.3z" fill="#ebe453" stroke="#c3bb3a" stroke-width=".7"/><path d="M3.200 2.200h11.200" stroke="#f7f3a3" stroke-width=".8"/></svg>
<span id="t80" class="t" style="left:61.900000000000006px;top:964.07px;font-size:11px;font-weight:400;color:#000;transform-origin:left center;transform:scaleX(0.9751);">Highways</span>
<svg style="position:absolute;left:0px;top:0px;" width="1" height="1" viewBox="0 0 1 1"><path d="M33 985.5H43" stroke="#8a8a8a" stroke-width="1" stroke-dasharray="1 2" fill="none"/></svg>
<svg style="position:absolute;left:42.800000000000004px;top:979.5px;" width="16" height="16" viewBox="0 0 16 16"><path d="M.5 2.200h4.500l1 1.300h5.500V5H.5z" fill="#d9d9c7" stroke="#b7b7a2" stroke-width=".5"/><path d="M2.600 1.500h12.600L12.600 12.200H.3z" fill="#ebe453" stroke="#c3bb3a" stroke-width=".7"/><path d="M3.200 2.200h11.200" stroke="#f7f3a3" stroke-width=".8"/></svg>
<span id="t81" class="t" style="left:61.900000000000006px;top:980.07px;font-size:11px;font-weight:400;color:#000;transform-origin:left center;transform:scaleX(0.9333);">Assemblies</span>
<div style="position:absolute;left:4px;top:1023px;width:394.5px;height:20px;background:#fff;border:1px solid #a9a9b8"></div>
<svg style="position:absolute;left:382px;top:1026px;" width="16" height="15" viewBox="0 0 16 15"><circle cx="6" cy="5.500" r="3.800" fill="#dfeaf8" stroke="#6c7896" stroke-width="1.200"/><path d="M9 8.500l4.500 4.500" stroke="#8a5a20" stroke-width="2.200" stroke-linecap="round"/><path d="M0 10.500h5l-2.500 3z" fill="#000"/></svg>
<svg style="position:absolute;left:403px;top:1025.5px;" width="15" height="16" viewBox="0 0 15 16"><rect x=".3" y=".3" width="14" height="15" fill="#e9e9e9" stroke="#c4c4c4" stroke-width=".6"/><g fill="#4c5cb0"><rect x="1" y="1.500" width="4.500" height="5"/><rect x="1" y="9" width="4.500" height="5"/></g><path d="M5.500 4h3v7.500h-3" fill="none" stroke="#3cb43c" stroke-width="1.300"/><rect x="10.500" y="2.500" width="2.700" height="11" fill="#f4f4f4" stroke="#b9b9b9" stroke-width=".6"/></svg>
<div style="position:absolute;left:430px;top:129px;width:3px;height:920px;background:#686868"></div>
<div style="position:absolute;left:433px;top:129.3px;width:1483px;height:886px;background:#fff"></div>
<div style="position:absolute;left:434px;top:130.2px;width:1481.8px;height:884.8px;background:#fff;border:1px solid #7b7b82"></div>
<div style="position:absolute;left:435px;top:131.2px;width:1463px;height:866.6px;background:#fff"></div>
<div style="position:absolute;left:1898px;top:131.2px;width:16px;height:866.6px;background:#efefef"></div>
<div style="position:absolute;left:435px;top:997.8px;width:1463px;height:16px;background:#ebebeb"></div>
<div style="position:absolute;left:1898px;top:997.8px;width:16px;height:16px;background:#efefef"></div>
<svg style="position:absolute;left:1903px;top:139px;" width="8" height="5" viewBox="0 0 8 5"><path d="M0 4.500h7.500l-3.750-4.300z" fill="#333"/></svg>
<svg style="position:absolute;left:1903px;top:987px;" width="8" height="5" viewBox="0 0 8 5"><path d="M0 0h7.500l-3.750 4.300z" fill="#333"/></svg>
<svg style="position:absolute;left:440.5px;top:1001.5px;" width="5" height="8" viewBox="0 0 5 8"><path d="M4.500 0v7.500l-4.300-3.750z" fill="#333"/></svg>
<svg style="position:absolute;left:1885.5px;top:1001.5px;" width="5" height="8" viewBox="0 0 5 8"><path d="M0 0v7.500l4.300-3.750z" fill="#333"/></svg>
<div style="position:absolute;left:1898.5px;top:427px;width:14.5px;height:274.5px;background:linear-gradient(90deg,#f7f7f7,#e3e3e3 50%,#cdcdcd);border:1px solid #9b9b9b;border-radius:2px"></div>
<svg style="position:absolute;left:1901.5px;top:560px;" width="9" height="8" viewBox="0 0 9 8"><path d="M0 .5h8M0 3h8M0 5.500h8" stroke="#555" stroke-width="1"/></svg>
<div style="position:absolute;left:929px;top:999.5px;width:473.5px;height:13.5px;background:linear-gradient(#f7f7f7,#e3e3e3 50%,#cdcdcd);border:1px solid #9b9b9b;border-radius:2px"></div>
<svg style="position:absolute;left:1161.5px;top:1002.5px;" width="8" height="8" viewBox="0 0 8 8"><path d="M.5 0v7M3 0v7M5.500 0v7" stroke="#555" stroke-width="1"/></svg>
<div style="position:absolute;left:800.5px;top:140px;width:58.0px;height:58.5px;background:#0000ff;border:2px solid #000"></div>
<div style="position:absolute;left:1154px;top:140px;width:87px;height:58.5px;background:#000;border:2px solid #000"></div>
<div style="position:absolute;left:1565px;top:140px;width:58.5px;height:58.5px;background:#0000ff;border:2px solid #000"></div>
<span id="t82" class="t" style="left:1534.5px;top:199.70px;font-size:10px;font-weight:400;color:#000;transform-origin:left center;transform:scaleX(0.8913);">GEN_RIGHT</span>
<div style="position:absolute;left:826.1px;top:198px;width:7.8px;height:102px;background:#0062ff"></div>
<div style="position:absolute;left:1194.1px;top:198px;width:7.8px;height:102px;background:#0062ff"></div>
<div style="position:absolute;left:1590.1px;top:193.5px;width:7.8px;height:93.5px;background:#0062ff"></div>
<div style="position:absolute;left:1589.5px;top:235.4px;width:9px;height:8.3px;background:#fff"></div>
<span id="t83" class="t" style="left:1594px;top:237.69px;font-size:7px;font-weight:400;color:#2a72ff;transform-origin:center center;transform:translateX(-50%) scaleX(1.0710);">HW612</span>
<div style="position:absolute;left:1579.5px;top:282.5px;width:29.0px;height:29.0px;background:#fff;border:2px solid #000"></div>
<div style="position:absolute;left:1590.1px;top:282px;width:7.8px;height:5.5px;background:#0062ff"></div>
<div style="position:absolute;left:1590.1px;top:306.5px;width:7.8px;height:5.5px;background:#0062ff"></div>
<span id="t84" class="t" style="left:1506px;top:293.70px;font-size:10px;font-weight:400;color:#000;transform-origin:left center;transform:scaleX(0.8873);">SW_GEN_RIGHT</span>
<div style="position:absolute;left:1590.1px;top:311px;width:7.8px;height:75px;background:#0062ff"></div>
<div style="position:absolute;left:1589.5px;top:341.4px;width:9px;height:8.3px;background:#fff"></div>
<span id="t85" class="t" style="left:1594px;top:343.69px;font-size:7px;font-weight:400;color:#2a72ff;transform-origin:center center;transform:translateX(-50%) scaleX(1.0710);">HW613</span>
<div style="position:absolute;left:1523px;top:381px;width:142.5px;height:58.5px;background:#0000ff;border:2px solid #000"></div>
<div style="position:absolute;left:1590.1px;top:381px;width:7.8px;height:5px;background:#0062ff"></div>
<div style="position:absolute;left:1590.1px;top:434px;width:7.8px;height:6px;background:#0062ff"></div>
<span id="t86" class="t" style="left:1517.7px;top:441.30px;font-size:10px;font-weight:400;color:#000;transform-origin:left center;transform:scaleX(0.9128);">AC_BUS_RIGHT</span>
<div style="position:absolute;left:1590.1px;top:439px;width:7.8px;height:117px;background:#0062ff"></div>
<div style="position:absolute;left:1589.5px;top:490.9px;width:9px;height:8.3px;background:#fff"></div>
<span id="t87" class="t" style="left:1594px;top:493.19px;font-size:7px;font-weight:400;color:#2a72ff;transform-origin:center center;transform:translateX(-50%) scaleX(1.0710);">HW614</span>
<div style="position:absolute;left:1285px;top:406.1px;width:87px;height:7.8px;background:#0062ff"></div>
<div style="position:absolute;left:1392px;top:406.1px;width:135px;height:7.8px;background:#0062ff"></div>
<div style="position:absolute;left:1367px;top:395.5px;width:29.5px;height:29.0px;background:#fff;border:2px solid #000"></div>
<div style="position:absolute;left:1366px;top:406.1px;width:6.5px;height:7.8px;background:#0062ff"></div>
<div style="position:absolute;left:1391.5px;top:406.1px;width:6.5px;height:7.8px;background:#0062ff"></div>
<svg style="position:absolute;left:1378.2px;top:416.3px;" width="8" height="18" viewBox="0 0 8 18"><path d="M0 0L5.400 7 4 7.600 7.600 17.500 2.300 9.200 1 4.800z" fill="#000"/></svg>
<span id="t88" class="t" style="left:1332px;top:432.70px;font-size:10px;font-weight:400;color:#000;transform-origin:left center;transform:scaleX(0.9087);">SW_AUX_RIGHT</span>
<div style="position:absolute;left:1305px;top:405.8px;width:26px;height:8.6px;background:#fff"></div>
<span id="t89" class="t" style="left:1318px;top:408.09px;font-size:7px;font-weight:400;color:#2a72ff;transform-origin:center center;transform:translateX(-50%) scaleX(1.0495);">HW610</span>
<div style="position:absolute;left:1446.5px;top:405.8px;width:26px;height:8.6px;background:#fff"></div>
<span id="t90" class="t" style="left:1459.5px;top:408.09px;font-size:7px;font-weight:400;color:#2a72ff;transform-origin:center center;transform:translateX(-50%) scaleX(1.0732);">HW611</span>
<div style="position:absolute;left:806.5px;top:553px;width:47.5px;height:56.5px;background:#a39200"></div>
<svg style="position:absolute;left:807.5px;top:553.5px;" width="43.5" height="53" viewBox="0 0 43.5 53"><rect width="43.500" height="53" fill="#00ff00"/><path d="M0 0h43.500v53z" fill="#0000ff"/><path d="M0 0l43.500 53" stroke="#9a7a20" stroke-width=".8"/><text x="22" y="7.500" font-size="9" fill="#8f8a10" text-anchor="middle">AC</text><text x="22" y="16.500" font-size="5.500" fill="#6a6a30" text-anchor="middle">AC/DC</text><text x="22" y="23" font-size="5" fill="#7a8a20" text-anchor="middle">Convertor</text><text x="22" y="53" font-size="10" fill="#8fae10" text-anchor="middle">DC</text></svg>
<div style="position:absolute;left:800px;top:551px;width:58.7px;height:57.7px;border:2px solid #000"></div>
<div style="position:absolute;left:826.1px;top:520px;width:7.8px;height:36px;background:#0062ff"></div>
<div style="position:absolute;left:826.1px;top:604px;width:7.8px;height:122px;background:#0062ff"></div>
<span id="t91" class="t" style="left:768px;top:610.70px;font-size:10px;font-weight:400;color:#000;transform-origin:left center;transform:scaleX(0.9350);">ADC_LEFT1</span>
<div style="position:absolute;left:825.5px;top:660.8px;width:9px;height:8.3px;background:#fff"></div>
<span id="t92" class="t" style="left:830px;top:663.09px;font-size:7px;font-weight:400;color:#2a72ff;transform-origin:center center;transform:translateX(-50%) scaleX(1.0710);">HW605</span>
<div style="position:absolute;left:1174.7px;top:549.5px;width:47.5px;height:58px;background:#a39200"></div>
<svg style="position:absolute;left:1177.9px;top:552.7px;" width="41.4" height="54" viewBox="0 0 41.4 54"><rect width="41.400" height="54" fill="#00ff00"/><path d="M1 0h40.400v52z" fill="#0000ff"/><path d="M1 0l40.400 52" stroke="#9a7a20" stroke-width=".8"/><text x="19" y="35" font-size="6" fill="#7ad020" text-anchor="middle">DC/AC</text><text x="19" y="41.500" font-size="5.500" fill="#7ad020" text-anchor="middle">Invertor</text></svg>
<div style="position:absolute;left:1168.2px;top:551px;width:58.7px;height:57.7px;border:2px solid #000"></div>
<div style="position:absolute;left:1194.1px;top:520px;width:7.8px;height:35.5px;background:#0062ff"></div>
<div style="position:absolute;left:1194.1px;top:604px;width:7.8px;height:122px;background:#0062ff"></div>
<span id="t93" class="t" style="left:1151.9px;top:610.40px;font-size:10px;font-weight:400;color:#000;transform-origin:left center;transform:scaleX(1.0529);">Invertor</span>
<svg style="position:absolute;left:1176.2px;top:546px;" width="45" height="5" viewBox="0 0 45 5"><g font-size="4.500" fill="#9a9000"><text x="3" y="4">AN</text><text x="20" y="4">BN</text><text x="36" y="4">CN</text></g></svg>
<svg style="position:absolute;left:1192px;top:610px;" width="12" height="6" viewBox="0 0 12 6"><text x="6" y="5" font-size="4.500" fill="#7f9a40" text-anchor="middle">DC</text></svg>
<div style="position:absolute;left:1193.5px;top:660.8px;width:9px;height:8.3px;background:#fff"></div>
<span id="t94" class="t" style="left:1198px;top:663.09px;font-size:7px;font-weight:400;color:#2a72ff;transform-origin:center center;transform:translateX(-50%) scaleX(1.0710);">HW709</span>
<div style="position:absolute;left:1571.1px;top:553px;width:47.5px;height:56.5px;background:#a39200"></div>
<svg style="position:absolute;left:1572.1px;top:553.5px;" width="43.5" height="53" viewBox="0 0 43.5 53"><rect width="43.500" height="53" fill="#00ff00"/><path d="M0 0h43.500v53z" fill="#0000ff"/><path d="M0 0l43.500 53" stroke="#9a7a20" stroke-width=".8"/><text x="22" y="7.500" font-size="9" fill="#8f8a10" text-anchor="middle">AC</text><text x="22" y="16.500" font-size="5.500" fill="#6a6a30" text-anchor="middle">AC/DC</text><text x="22" y="23" font-size="5" fill="#7a8a20" text-anchor="middle">Convertor</text><text x="22" y="53" font-size="10" fill="#8fae10" text-anchor="middle">DC</text></svg>
<div style="position:absolute;left:1564.6px;top:551px;width:58.7px;height:57.7px;border:2px solid #000"></div>
<div style="position:absolute;left:1590.1px;top:545px;width:7.8px;height:11px;background:#0062ff"></div>
<div style="position:absolute;left:1590.1px;top:604px;width:7.8px;height:122px;background:#0062ff"></div>
<span id="t95" class="t" style="left:1527px;top:611.70px;font-size:10px;font-weight:400;color:#000;transform-origin:left center;transform:scaleX(0.9470);">ADC_RIGHT1</span>
<div style="position:absolute;left:1589.5px;top:660.4px;width:9px;height:8.3px;background:#fff"></div>
<span id="t96" class="t" style="left:1594px;top:662.69px;font-size:7px;font-weight:400;color:#2a72ff;transform-origin:center center;transform:translateX(-50%) scaleX(1.0710);">HW615</span>
<div style="position:absolute;left:896px;top:732.1px;width:107px;height:7.8px;background:#0062ff"></div>
<div style="position:absolute;left:1024px;top:732.1px;width:121px;height:7.8px;background:#0062ff"></div>
<div style="position:absolute;left:1250px;top:732.1px;width:122px;height:7.8px;background:#0062ff"></div>
<div style="position:absolute;left:1392px;top:732.1px;width:121px;height:7.8px;background:#0062ff"></div>
<div style="position:absolute;left:758.4px;top:721px;width:143.20000000000005px;height:43.5px;background:#00ff00;border:2px solid #000"></div>
<div style="position:absolute;left:826.1px;top:720px;width:7.8px;height:5.7000000000000455px;background:#0062ff"></div>
<div style="position:absolute;left:896px;top:732.1px;width:5px;height:7.8px;background:#0062ff"></div>
<svg style="position:absolute;left:826px;top:755px;" width="8" height="18" viewBox="0 0 8 18"><path d="M0 0L5.400 7 4 7.600 7.600 17.500 2.300 9.200 1 4.800z" fill="#000"/></svg>
<span id="t97" class="t" style="left:759.5px;top:773.20px;font-size:10px;font-weight:400;color:#000;transform-origin:left center;transform:scaleX(0.8855);">DC_BUS_LEFT</span>
<div style="position:absolute;left:998.3px;top:721px;width:30.40000000000009px;height:29.700000000000045px;background:#fff;border:2px solid #000"></div>
<div style="position:absolute;left:998px;top:732.1px;width:5px;height:7.8px;background:#0062ff"></div>
<div style="position:absolute;left:1024px;top:732.1px;width:5px;height:7.8px;background:#0062ff"></div>
<svg style="position:absolute;left:1010.4px;top:740px;" width="8" height="18" viewBox="0 0 8 18"><path d="M0 0L5.400 7 4 7.600 7.600 17.500 2.300 9.200 1 4.800z" fill="#000"/></svg>
<span id="t98" class="t" style="left:970px;top:757.40px;font-size:10px;font-weight:400;color:#000;transform-origin:left center;transform:scaleX(0.8847);">SW_DC_LEFT</span>
<div style="position:absolute;left:937px;top:731.8px;width:26px;height:7.1px;background:#fff"></div>
<span id="t99" class="t" style="left:950px;top:733.49px;font-size:7px;font-weight:400;color:#2a72ff;transform-origin:center center;transform:translateX(-50%) scaleX(1.0710);">HW700</span>
<div style="position:absolute;left:937px;top:738.9px;width:26px;height:1.1px;background:#0062ff"></div>
<div style="position:absolute;left:1072px;top:731.8px;width:26px;height:7.1px;background:#fff"></div>
<span id="t100" class="t" style="left:1085px;top:733.49px;font-size:7px;font-weight:400;color:#2a72ff;transform-origin:center center;transform:translateX(-50%) scaleX(1.0710);">HW704</span>
<div style="position:absolute;left:1072px;top:738.9px;width:26px;height:1.1px;background:#0062ff"></div>
<div style="position:absolute;left:1298px;top:731.8px;width:26px;height:7.1px;background:#fff"></div>
<span id="t101" class="t" style="left:1311px;top:733.49px;font-size:7px;font-weight:400;color:#2a72ff;transform-origin:center center;transform:translateX(-50%) scaleX(1.0710);">HW705</span>
<div style="position:absolute;left:1298px;top:738.9px;width:26px;height:1.1px;background:#0062ff"></div>
<div style="position:absolute;left:1440px;top:731.8px;width:26px;height:7.1px;background:#fff"></div>
<span id="t102" class="t" style="left:1453px;top:733.49px;font-size:7px;font-weight:400;color:#2a72ff;transform-origin:center center;transform:translateX(-50%) scaleX(1.0710);">HW701</span>
<div style="position:absolute;left:1440px;top:738.9px;width:26px;height:1.1px;background:#0062ff"></div>
<div style="position:absolute;left:1140.7px;top:721px;width:115.0px;height:43.5px;background:#00ff00;border:2px solid #000"></div>
<div style="position:absolute;left:1194.1px;top:720px;width:7.8px;height:5.7000000000000455px;background:#0062ff"></div>
<div style="position:absolute;left:1140px;top:732.1px;width:5px;height:7.8px;background:#0062ff"></div>
<div style="position:absolute;left:1250.5px;top:732.1px;width:5.5px;height:7.8px;background:#0062ff"></div>
<div style="position:absolute;left:1194.1px;top:759.7px;width:7.8px;height:6.2999999999999545px;background:#0062ff"></div>
<span id="t103" class="t" style="left:1126.5px;top:768.40px;font-size:10px;font-weight:400;color:#000;transform-origin:left center;transform:scaleX(0.9143);">BATTERY BUS</span>
<div style="position:absolute;left:1367px;top:721px;width:29.700000000000045px;height:29.5px;background:#fff;border:2px solid #000"></div>
<div style="position:absolute;left:1366px;top:732.1px;width:6px;height:7.8px;background:#0062ff"></div>
<div style="position:absolute;left:1392px;top:732.1px;width:6px;height:7.8px;background:#0062ff"></div>
<svg style="position:absolute;left:1377.7px;top:741px;" width="8" height="18" viewBox="0 0 8 18"><path d="M0 0L5.400 7 4 7.600 7.600 17.500 2.300 9.200 1 4.800z" fill="#000"/></svg>
<span id="t104" class="t" style="left:1335px;top:757.20px;font-size:10px;font-weight:400;color:#000;transform-origin:left center;transform:scaleX(0.9025);">SW_DC_RIGHT</span>
<div style="position:absolute;left:1508px;top:721px;width:171.70000000000005px;height:43.5px;background:#00ff00;border:2px solid #000"></div>
<div style="position:absolute;left:1590.1px;top:720px;width:7.8px;height:5.7000000000000455px;background:#0062ff"></div>
<div style="position:absolute;left:1507px;top:732.1px;width:6px;height:7.8px;background:#0062ff"></div>
<svg style="position:absolute;left:1590.5px;top:755.5px;" width="8" height="18" viewBox="0 0 8 18"><path d="M0 0L5.400 7 4 7.600 7.600 17.500 2.300 9.200 1 4.800z" fill="#000"/></svg>
<span id="t105" class="t" style="left:1513px;top:773.20px;font-size:10px;font-weight:400;color:#000;transform-origin:left center;transform:scaleX(0.9023);">DC_BUS_RIGHT</span>
<div style="position:absolute;left:1194.1px;top:765px;width:7.8px;height:88px;background:#0062ff"></div>
<div style="position:absolute;left:1193.5px;top:802.0px;width:9px;height:8.3px;background:#fff"></div>
<span id="t106" class="t" style="left:1198px;top:804.29px;font-size:7px;font-weight:400;color:#2a72ff;transform-origin:center center;transform:translateX(-50%) scaleX(1.0710);">HW706</span>
<div style="position:absolute;left:1183.3px;top:848.4px;width:29.200000000000045px;height:29.0px;background:#fff;border:2px solid #000"></div>
<div style="position:absolute;left:1194.1px;top:848px;width:7.8px;height:4.7000000000000455px;background:#0062ff"></div>
<div style="position:absolute;left:1194.1px;top:873px;width:7.8px;height:5px;background:#0062ff"></div>
<span id="t107" class="t" style="left:1115.8px;top:861.70px;font-size:10px;font-weight:400;color:#000;transform-origin:left center;transform:scaleX(0.9203);">SW_BATT_DC</span>
<div style="position:absolute;left:1194.1px;top:877px;width:7.8px;height:61px;background:#0062ff"></div>
<div style="position:absolute;left:1193.5px;top:902.0px;width:9px;height:8.3px;background:#fff"></div>
<span id="t108" class="t" style="left:1198px;top:904.29px;font-size:7px;font-weight:400;color:#2a72ff;transform-origin:center center;transform:translateX(-50%) scaleX(1.0710);">HW707</span>
<div style="position:absolute;left:1168.4px;top:933.5px;width:58.799999999999955px;height:43.700000000000045px;background:#00ff00;border:2px solid #c00000"></div>
<div style="position:absolute;left:1170.2px;top:935.3px;width:1.3px;height:40px;background:#000"></div>
<div style="position:absolute;left:1194.1px;top:933px;width:7.8px;height:4.7999999999999545px;background:#0062ff"></div>
<div style="position:absolute;left:1167px;top:932px;width:5px;height:5px;background:#9a9a9a"></div>
<div style="position:absolute;left:1223.5px;top:932px;width:5px;height:5px;background:#9a9a9a"></div>
<div style="position:absolute;left:1167px;top:973.7px;width:5px;height:5px;background:#9a9a9a"></div>
<div style="position:absolute;left:1223.5px;top:973.7px;width:5px;height:5px;background:#9a9a9a"></div>
<svg style="position:absolute;left:1194px;top:968px;" width="8" height="18" viewBox="0 0 8 18"><path d="M0 0L5.400 7 4 7.600 7.600 17.500 2.300 9.200 1 4.800z" fill="#b00000"/></svg>
<span id="t109" class="t" style="left:1164.6px;top:982.30px;font-size:10px;font-weight:400;color:#a00000;transform-origin:left center;transform:scaleX(0.9429);font-weight:700">Battery</span>
<div style="position:absolute;left:284px;top:174.8px;width:1004.5px;height:352.2px;border-radius:7px;box-shadow:0 1px 7px 1px rgba(0,0,0,.42),0 0 2px rgba(0,0,0,.5);background:rgba(252,253,254,.965);border:1px solid #4f5256;overflow:hidden"><div style="position:absolute;left:516.500px;top:-2px;width:58px;height:23.700px;background:#0909d2;filter:blur(1.500px)"></div><div style="position:absolute;left:869px;top:-2px;width:87px;height:23.700px;background:#26282a;filter:blur(1.500px)"></div><div style="position:absolute;left:541px;top:21px;width:9px;height:9px;background:#2f7cff;filter:blur(2px);opacity:.8"></div><div style="position:absolute;left:909px;top:21px;width:9px;height:9px;background:#2f7cff;filter:blur(2px);opacity:.8"></div><div style="position:absolute;left:685px;top:21px;width:89px;height:20px;border:2px solid #8db4ee;border-radius:5px;filter:blur(1.500px);opacity:.75"></div><div style="position:absolute;left:490px;top:25px;width:24px;height:8px;background:#b9d3f7;filter:blur(2.500px);opacity:.7"></div><div style="position:absolute;left:820px;top:25px;width:34px;height:8px;background:#b9d3f7;filter:blur(2.500px);opacity:.7"></div><div style="position:absolute;left:135px;top:0;width:22px;height:30px;background:#cfe3f7;filter:blur(3px);opacity:.8"></div><div style="position:absolute;left:997px;top:230.500px;width:8px;height:8px;background:#1f74ff;filter:blur(1.200px);opacity:.9"></div><div style="position:absolute;left:541.500px;top:344px;width:8px;height:9px;background:#5a9aff;filter:blur(1.500px);opacity:.8"></div><div style="position:absolute;left:909.500px;top:344px;width:8px;height:9px;background:#5a9aff;filter:blur(1.500px);opacity:.8"></div><div style="position:absolute;left:0;top:0;width:100%;height:100%;border:1px solid rgba(255,255,255,.9);border-radius:6px"></div></div>
<svg style="position:absolute;left:292px;top:182px;" width="16" height="16" viewBox="0 0 16 16"><rect width="16" height="16" fill="#b3191c"/><g fill="none" stroke="#fff" stroke-width="1.500"><path d="M2 4.500h3.500M2 8h3M2 11.500h3.500"/><path d="M5.500 4.500c1.300.8 1.300 6.200 0 7" stroke-width="1.300"/><path d="M14.500 5.300h-3M14.500 10.700h-3"/></g><circle cx="8.800" cy="8" r="2.400" fill="#fff"/><rect x="9" y="6.500" width="3.300" height="3" fill="#fff"/></svg>
<span id="t110" class="t" style="left:313.3px;top:183.84px;font-size:12px;font-weight:400;color:#000;transform-origin:left center;transform:scaleX(0.9951);">Battery Analysis - Battery</span>
<div style="position:absolute;left:1236.5px;top:175px;width:46px;height:19.5px;border:1px solid #6f767c;border-top:none;border-radius:0 0 4px 4px;background:linear-gradient(rgba(255,255,255,.85),rgba(236,240,244,.85));box-shadow:inset 0 0 0 1px rgba(255,255,255,.8)"></div>
<svg style="position:absolute;left:1254.5px;top:179.5px;" width="13" height="11" viewBox="0 0 13 11"><path d="M.8 .5h3.400l2.100 2.700 2.100-2.700h3.400l-3.800 4.700 3.800 4.800h-3.400l-2.100-2.800-2.100 2.800h-3.400l3.800-4.800z" fill="#fff" stroke="#40484f" stroke-width="1"/></svg>
<div style="position:absolute;left:291px;top:204.3px;width:991.3px;height:316.2px;background:#f4f4f4;border:1px solid #8f9398"></div>
<div style="position:absolute;left:292px;top:205.3px;width:989.3px;height:29px;background:linear-gradient(#e6e6e6,#dadada)"></div>
<div style="position:absolute;left:297.5px;top:209.8px;width:145.10000000000002px;height:24.2px;background:linear-gradient(#f9f9f9,#f0f0f0);border:1px solid #c3c3c3;border-bottom:none;border-radius:3px 3px 0 0"></div>
<span id="t111" class="t" style="left:303.4px;top:216.84px;font-size:12px;font-weight:400;color:#444;transform-origin:left center;transform:scaleX(0.9919);">G1=Ground Maintenance</span>
<div style="position:absolute;left:444.4px;top:209.8px;width:91.30000000000007px;height:24.2px;background:linear-gradient(#f1f1f1,#e2e2e2);border:1px solid #c3c3c3;border-bottom:none;border-radius:3px 3px 0 0"></div>
<span id="t112" class="t" style="left:450px;top:216.84px;font-size:12px;font-weight:400;color:#444;transform-origin:left center;transform:scaleX(1.0014);">G2=Calibration</span>
<div style="position:absolute;left:537.4px;top:209.8px;width:164.39999999999998px;height:24.2px;background:linear-gradient(#f1f1f1,#e2e2e2);border:1px solid #c3c3c3;border-bottom:none;border-radius:3px 3px 0 0"></div>
<span id="t113" class="t" style="left:543.2px;top:216.84px;font-size:12px;font-weight:400;color:#444;transform-origin:left center;transform:scaleX(0.9906);">G3=Loading and Preparation</span>
<div style="position:absolute;left:703.4px;top:209.8px;width:98.0px;height:24.2px;background:linear-gradient(#f1f1f1,#e2e2e2);border:1px solid #c3c3c3;border-bottom:none;border-radius:3px 3px 0 0"></div>
<span id="t114" class="t" style="left:709px;top:216.84px;font-size:12px;font-weight:400;color:#444;transform-origin:left center;transform:scaleX(0.9680);">G10=Emergency</span>
<div style="position:absolute;left:292px;top:234px;width:989.3px;height:24.5px;background:linear-gradient(#f7f7f7 0%,#ececec 50%,#dedede 100%);border-top:1px solid #c6c6c6;border-bottom:1px solid #c0c0c0"></div>
<div style="position:absolute;left:292px;top:258.5px;width:989.3px;height:24.3px;background:linear-gradient(#f7f7f7 0%,#ececec 50%,#dedede 100%);border-bottom:1px solid #c0c0c0"></div>
<div style="position:absolute;left:551.8px;top:235px;width:1px;height:23.5px;background:#c4c4c4"></div>
<div style="position:absolute;left:892.7px;top:235px;width:1px;height:23.5px;background:#c4c4c4"></div>
<div style="position:absolute;left:1135.7px;top:235px;width:1px;height:23.5px;background:#c4c4c4"></div>
<div style="position:absolute;left:379.8px;top:259px;width:1px;height:23.5px;background:#c4c4c4"></div>
<div style="position:absolute;left:551.8px;top:259px;width:1px;height:23.5px;background:#c4c4c4"></div>
<div style="position:absolute;left:626.8px;top:259px;width:1px;height:23.5px;background:#c4c4c4"></div>
<div style="position:absolute;left:817.3px;top:259px;width:1px;height:23.5px;background:#c4c4c4"></div>
<div style="position:absolute;left:892.7px;top:259px;width:1px;height:23.5px;background:#c4c4c4"></div>
<div style="position:absolute;left:1006.8px;top:259px;width:1px;height:23.5px;background:#c4c4c4"></div>
<div style="position:absolute;left:1135.7px;top:259px;width:1px;height:23.5px;background:#c4c4c4"></div>
<span id="t115" class="t" style="left:423.5px;top:241.84px;font-size:12px;font-weight:700;color:#2b2b2b;transform-origin:center center;transform:translateX(-50%) scaleX(0.9816);">LOAD IDENTIFICATION</span>
<span id="t116" class="t" style="left:723.5px;top:241.84px;font-size:12px;font-weight:700;color:#2b2b2b;transform-origin:center center;transform:translateX(-50%) scaleX(0.9923);">DISCHARGING PATTERN AMPS (MINS or CONT)</span>
<span id="t117" class="t" style="left:1015.4px;top:241.84px;font-size:12px;font-weight:700;color:#2b2b2b;transform-origin:center center;transform:translateX(-50%) scaleX(0.9655);">SUM OF PATTERNS</span>
<span id="t118" class="t" style="left:1210px;top:241.84px;font-size:12px;font-weight:700;color:#2b2b2b;transform-origin:center center;transform:translateX(-50%) scaleX(0.9298);">AVERAGE CURRENT</span>
<span id="t119" class="t" style="left:337.5px;top:266.24px;font-size:12px;font-weight:700;color:#2b2b2b;transform-origin:center center;transform:translateX(-50%) scaleX(0.9644);">Bus Name</span>
<span id="t120" class="t" style="left:467.3px;top:266.24px;font-size:12px;font-weight:700;color:#2b2b2b;transform-origin:center center;transform:translateX(-50%) scaleX(0.9978);">Equipment Name</span>
<span id="t121" class="t" style="left:590.8px;top:266.24px;font-size:12px;font-weight:700;color:#2b2b2b;transform-origin:center center;transform:translateX(-50%) scaleX(0.9988);">Pattern 1</span>
<span id="t122" class="t" style="left:724px;top:266.24px;font-size:12px;font-weight:700;color:#2b2b2b;transform-origin:center center;transform:translateX(-50%) scaleX(0.9988);">Pattern 2</span>
<span id="t123" class="t" style="left:856.8px;top:266.24px;font-size:12px;font-weight:700;color:#2b2b2b;transform-origin:center center;transform:translateX(-50%) scaleX(0.9988);">Pattern 3</span>
<span id="t124" class="t" style="left:950.6px;top:266.24px;font-size:12px;font-weight:700;color:#2b2b2b;transform-origin:center center;transform:translateX(-50%) scaleX(1.0417);">AMP-MINS</span>
<span id="t125" class="t" style="left:1072.5px;top:266.24px;font-size:12px;font-weight:700;color:#2b2b2b;transform-origin:center center;transform:translateX(-50%) scaleX(0.9812);">AMPS (CONT)</span>
<span id="t126" class="t" style="left:1210px;top:266.24px;font-size:12px;font-weight:700;color:#2b2b2b;transform-origin:center center;transform:translateX(-50%) scaleX(0.9720);">AMPS</span>
<div style="position:absolute;left:292px;top:282.4px;width:989.3px;height:23.900000000000034px;background:#c3e6f5;border-bottom:1px solid #dcebf1"></div>
<div style="position:absolute;left:292px;top:306.3px;width:989.3px;height:24.0px;background:#f8f8f8;border-bottom:1px solid #e9e7e7"></div>
<div style="position:absolute;left:292px;top:330.3px;width:989.3px;height:24.0px;background:#ffffff;border-bottom:1px solid #e9e7e7"></div>
<div style="position:absolute;left:292px;top:354.3px;width:989.3px;height:24.0px;background:#f8f8f8;border-bottom:1px solid #e9e7e7"></div>
<div style="position:absolute;left:292px;top:378.3px;width:989.3px;height:24.0px;background:#c3e6f5;border-bottom:1px solid #dcebf1"></div>
<div style="position:absolute;left:292px;top:402.3px;width:989.3px;height:24.0px;background:#f8f8f8;border-bottom:1px solid #e9e7e7"></div>
<div style="position:absolute;left:292px;top:426.3px;width:989.3px;height:24.5px;background:#ffffff;border-bottom:1px solid #e9e7e7"></div>
<div style="position:absolute;left:552.3px;top:306.3px;width:340.9px;height:23.0px;background:#ebf8ea"></div>
<div style="position:absolute;left:552.3px;top:330.3px;width:340.9px;height:23.0px;background:#f0fff2"></div>
<div style="position:absolute;left:552.3px;top:354.3px;width:340.9px;height:23.0px;background:#ebf8ea"></div>
<div style="position:absolute;left:552.3px;top:354.3px;width:75px;height:23.5px;background:#c9c9c9"></div>
<div style="position:absolute;left:379.8px;top:282.4px;width:1px;height:168.40000000000003px;background:rgba(236,230,230,.85)"></div>
<div style="position:absolute;left:551.8px;top:282.4px;width:1px;height:168.40000000000003px;background:rgba(236,230,230,.85)"></div>
<div style="position:absolute;left:626.8px;top:282.4px;width:1px;height:168.40000000000003px;background:rgba(236,230,230,.85)"></div>
<div style="position:absolute;left:817.3px;top:282.4px;width:1px;height:168.40000000000003px;background:rgba(236,230,230,.85)"></div>
<div style="position:absolute;left:892.7px;top:282.4px;width:1px;height:168.40000000000003px;background:rgba(236,230,230,.85)"></div>
<div style="position:absolute;left:1006.8px;top:282.4px;width:1px;height:168.40000000000003px;background:rgba(236,230,230,.85)"></div>
<div style="position:absolute;left:1135.7px;top:282.4px;width:1px;height:168.40000000000003px;background:rgba(236,230,230,.85)"></div>
<span id="t127" class="t" style="left:295.3px;top:288.04px;font-size:12px;font-weight:700;color:#111;transform-origin:left center;transform:scaleX(0.9189);">BATTERY BUS</span>
<span id="t128" class="t" style="left:384.5px;top:311.94px;font-size:12px;font-weight:400;color:#333;transform-origin:left center;transform:scaleX(0.9101);">BATT_LOAD1</span>
<span id="t129" class="t" style="left:384.5px;top:335.94px;font-size:12px;font-weight:400;color:#333;transform-origin:left center;transform:scaleX(0.9101);">BATT_LOAD2</span>
<span id="t130" class="t" style="left:384.5px;top:359.94px;font-size:12px;font-weight:400;color:#333;transform-origin:left center;transform:scaleX(0.9101);">BATT_LOAD3</span>
<span id="t131" class="t" style="left:555.3px;top:311.94px;font-size:12px;font-weight:400;color:#2e8b57;transform-origin:left center;transform:scaleX(0.9352);">2(10)</span>
<span id="t132" class="t" style="left:820.6px;top:311.94px;font-size:12px;font-weight:400;color:#2e8b57;transform-origin:left center;transform:scaleX(1.0064);">4(cont)</span>
<span id="t133" class="t" style="left:555.8px;top:359.94px;font-size:12px;font-weight:400;color:#333;transform-origin:left center;transform:scaleX(0.9511);">4(3)</span>
<span id="t134" class="t" style="left:897.2px;top:311.94px;font-size:12px;font-weight:400;color:#333;transform-origin:left center;transform:scaleX(0.9332);">20.0</span>
<span id="t135" class="t" style="left:1010.9px;top:311.94px;font-size:12px;font-weight:400;color:#333;transform-origin:left center;transform:scaleX(0.9169);">4.0</span>
<span id="t136" class="t" style="left:1140px;top:311.94px;font-size:12px;font-weight:400;color:#333;transform-origin:left center;transform:scaleX(0.9169);">4.1</span>
<span id="t137" class="t" style="left:897.2px;top:335.94px;font-size:12px;font-weight:400;color:#333;transform-origin:left center;transform:scaleX(0.9169);">0.0</span>
<span id="t138" class="t" style="left:1010.9px;top:335.94px;font-size:12px;font-weight:400;color:#333;transform-origin:left center;transform:scaleX(0.9169);">0.0</span>
<span id="t139" class="t" style="left:1140px;top:335.94px;font-size:12px;font-weight:400;color:#333;transform-origin:left center;transform:scaleX(0.9169);">0.0</span>
<span id="t140" class="t" style="left:897.2px;top:359.94px;font-size:12px;font-weight:400;color:#333;transform-origin:left center;transform:scaleX(0.9332);">12.0</span>
<span id="t141" class="t" style="left:1010.9px;top:359.94px;font-size:12px;font-weight:400;color:#333;transform-origin:left center;transform:scaleX(0.9169);">0.0</span>
<span id="t142" class="t" style="left:1140px;top:359.94px;font-size:12px;font-weight:400;color:#333;transform-origin:left center;transform:scaleX(0.9324);">0.033</span>
<span id="t143" class="t" style="left:897.2px;top:407.94px;font-size:12px;font-weight:400;color:#333;transform-origin:left center;transform:scaleX(0.9332);">32.0</span>
<span id="t144" class="t" style="left:1010.9px;top:407.94px;font-size:12px;font-weight:400;color:#333;transform-origin:left center;transform:scaleX(0.9169);">4.0</span>
<span id="t145" class="t" style="left:1140px;top:407.94px;font-size:12px;font-weight:400;color:#333;transform-origin:left center;transform:scaleX(0.9169);">4.1</span>
<span id="t146" class="t" style="left:295.3px;top:383.94px;font-size:12px;font-weight:700;color:#111;transform-origin:left center;transform:scaleX(0.9514);">TOTAL</span>
<span id="t147" class="t" style="left:383px;top:383.94px;font-size:12px;font-weight:700;color:#111;transform-origin:left center;transform:scaleX(1.0126);">Battery Capacity (AMP-MI...</span>
<span id="t148" class="t" style="left:630px;top:383.94px;font-size:12px;font-weight:700;color:#111;transform-origin:left center;transform:scaleX(0.9929);">Battery Elapsed Time (MINS)</span>
<span id="t149" class="t" style="left:896.4px;top:383.94px;font-size:12px;font-weight:700;color:#111;transform-origin:left center;transform:scaleX(1.0174);">TOTAL AMP-MINS</span>
<span id="t150" class="t" style="left:1010.6px;top:383.94px;font-size:12px;font-weight:700;color:#111;transform-origin:left center;transform:scaleX(0.9807);">TOTAL AMPS (CONT)</span>
<span id="t151" class="t" style="left:1139.6px;top:383.94px;font-size:12px;font-weight:700;color:#111;transform-origin:left center;transform:scaleX(0.9574);">TOTAL AVERAGE (AMPS)</span>
<span id="t152" class="t" style="left:384.5px;top:407.94px;font-size:12px;font-weight:400;color:#333;transform-origin:left center;transform:scaleX(0.9264);">1488.0</span>
<span id="t153" class="t" style="left:631px;top:407.94px;font-size:12px;font-weight:400;color:#333;transform-origin:left center;transform:scaleX(0.9257);">364.0</span>
<div style="position:absolute;left:292px;top:450.8px;width:989.3px;height:14px;background:#ececec;border-top:1px solid #d4d4d4;border-bottom:1px solid #d4d4d4"></div>
<div style="position:absolute;left:304.5px;top:453.3px;width:965.5px;height:9.5px;background:linear-gradient(#f2f2f2,#d9d9d9);border:1px solid #b4b4b4;border-radius:4px"></div>
<svg style="position:absolute;left:294.5px;top:454px;" width="5" height="8" viewBox="0 0 5 8"><path d="M4 .5L.8 3.800 4 7.100" fill="none" stroke="#6e6e6e" stroke-width="1"/></svg>
<svg style="position:absolute;left:1273.5px;top:454px;" width="5" height="8" viewBox="0 0 5 8"><path d="M.8 .5L4 3.800 .8 7.100" fill="none" stroke="#6e6e6e" stroke-width="1"/></svg>
<div style="position:absolute;left:1167.4px;top:480.5px;width:32.899999999999864px;height:24px;background:linear-gradient(#f6f6f6,#e9e9e9 50%,#dcdcdc);border:1px solid #b3b3b3;border-radius:3px;box-shadow:0 1px 0 rgba(255,255,255,.7)"></div>
<span id="t154" class="t" style="left:1183.85px;top:486.84px;font-size:12px;font-weight:400;color:#333;transform-origin:center center;transform:translateX(-50%) scaleX(0.9802);">OK</span>
<div style="position:absolute;left:1215px;top:480.5px;width:52px;height:24px;background:linear-gradient(#f6f6f6,#e9e9e9 50%,#dcdcdc);border:1px solid #b3b3b3;border-radius:3px;box-shadow:0 1px 0 rgba(255,255,255,.7)"></div>
<span id="t155" class="t" style="left:1241.0px;top:486.84px;font-size:12px;font-weight:400;color:#333;transform-origin:center center;transform:translateX(-50%) scaleX(0.9636);">Cancel</span>
<div style="position:absolute;left:433px;top:1015px;width:1483px;height:4px;background:#fff"></div>
<div style="position:absolute;left:726px;top:1019px;width:1190px;height:1px;background:#7e7e86"></div>
<div style="position:absolute;left:433px;top:1019px;width:294px;height:22.8px;background:#fff;border-right:1px solid #7e7e86;border-bottom:1px solid #7e7e86"></div>
<div style="position:absolute;left:727px;top:1020px;width:1189px;height:22.8px;background:#efefef"></div>
<div style="position:absolute;left:431px;top:1042px;width:1489px;height:0.8px;background:#efefef"></div>
<div style="position:absolute;left:431px;top:1042.8px;width:1489px;height:1.2px;background:#fff"></div>
<div style="position:absolute;left:431px;top:1044px;width:1489px;height:5px;background:#eeeeee"></div>
<div style="position:absolute;left:430px;top:1042px;width:1.2px;height:6.8px;background:#686868"></div>
<svg style="position:absolute;left:439.6px;top:1023px;" width="16.5" height="16.5" viewBox="0 0 16.5 16.5"><rect width="16.500" height="16.500" fill="#b3191c"/><g fill="none" stroke="#fff" stroke-width="1.500"><path d="M2 4.500h3.500M2 8.200h3M2 12h3.500"/><path d="M5.500 4.500c1.300.8 1.300 6.700 0 7.500" stroke-width="1.300"/><path d="M15 5.500h-3M15 11h-3"/></g><circle cx="9" cy="8.200" r="2.500" fill="#fff"/><rect x="9.200" y="6.700" width="3.500" height="3" fill="#fff"/></svg>
<span id="t156" class="t" style="left:460px;top:1025.67px;font-size:11px;font-weight:400;color:#000;transform-origin:left center;transform:scaleX(0.9583);">Logic Design - Single Line Diagram:Rev2:Diagram1*</span>
<svg style="position:absolute;left:711px;top:1026px;" width="10" height="10" viewBox="0 0 10 10"><rect x=".3" y=".3" width="9.4" height="9.4" rx="1.5" fill="#cbcbcb" stroke="#c2c2c2" stroke-width=".6"/><path d="M2.800 2.800l4.400 4.400M7.200 2.800l-4.400 4.400" stroke="#fff" stroke-width="1.600"/></svg>
<svg style="position:absolute;left:434.5px;top:1043.8px;" width="18" height="4" viewBox="0 0 18 4"><path d="M0 3.600h5.800l-2.900-3.400z" fill="#000"/><path d="M11 .2h5.800l-2.900 3.400z" fill="#000"/></svg>
<div style="position:absolute;left:0px;top:1048.9px;width:1920px;height:1.3px;background:#fdfdfd"></div>
<svg style="position:absolute;left:1128px;top:1058.8px;" width="14" height="14" viewBox="0 0 14 14"><rect x=".4" y=".4" width="13.200" height="13.200" fill="#cfcfcf" stroke="#a9a9a9" stroke-width=".8"/><g fill="#f4f4f4" stroke="#8f8f8f" stroke-width=".6"><rect x="2.500" y="2.500" width="2.500" height="2.500"/><rect x="9" y="2.500" width="2.500" height="2.500"/><rect x="2.500" y="9" width="2.500" height="2.500"/><rect x="9" y="9" width="2.500" height="2.500"/></g></svg>
<svg style="position:absolute;left:1152.8px;top:1059.5px;" width="13" height="13" viewBox="0 0 13 13"><circle cx="7.500" cy="6.200" r="5" fill="none" stroke="#7b8bd2" stroke-width="1"/><rect x=".5" y="5" width="2.500" height="2.500" fill="#fff" stroke="#000" stroke-width="1"/></svg>
<svg style="position:absolute;left:1177.8px;top:1059px;" width="14.5" height="14.5" viewBox="0 0 14.5 14.5"><path d="M2 1.800h10.500" stroke="#d03030" stroke-width="1"/><g fill="#fff" stroke="#000" stroke-width="1"><rect x=".7" y=".7" width="2.200" height="2.200"/><rect x="11.600" y=".7" width="2.200" height="2.200"/><rect x=".7" y="11.600" width="2.200" height="2.200"/><rect x="11.600" y="11.600" width="2.200" height="2.200"/></g></svg>
<svg style="position:absolute;left:1203.8px;top:1059px;" width="14.5" height="14.5" viewBox="0 0 14.5 14.5"><path d="M2.500 12L12 2.500" stroke="#9abf9a" stroke-width="1"/><g fill="#fff" stroke="#333" stroke-width=".8"><path d="M2.500 10l2 2-2 2-2-2z"/><path d="M12 .5l2 2-2 2-2-2z"/></g></svg>
<svg style="position:absolute;left:1230px;top:1057.3px;" width="15.5" height="15.5" viewBox="0 0 15.5 15.5"><path d="M2 0h12.500a1 1 0 0 1 1 1v13.500a1 1 0 0 1-1 1H2a1 1 0 0 1-1-1V11h-1V8.500h1V1a1 1 0 0 1 1-1z" fill="#636363"/><path d="M3 4h11M3 8h11" stroke="#757575" stroke-width=".6"/></svg>
<svg style="position:absolute;left:1255.8px;top:1057.8px;" width="15" height="15" viewBox="0 0 15 15"><path d="M7.500 0v15M0 7.500h15" stroke="#a0a0a0" stroke-width="1"/><rect x="3.800" y="3.800" width="7.400" height="7.400" fill="#f0f0f0" stroke="#8a8a8a" stroke-width="1"/><path d="M7.500 5.500v4M5.500 7.500h4" stroke="#a0a0a0" stroke-width=".8"/></svg>
<div style="position:absolute;left:1279.2px;top:1055.5px;width:139.29999999999995px;height:19.09999999999991px;background:#f0f0f0;border:1.500px solid;border-color:#7e7e7e #fdfdfd #fdfdfd #7e7e7e"></div>
<svg style="position:absolute;left:1286.4px;top:1059.7px;" width="12" height="13.5" viewBox="0 0 12 13.5"><defs><linearGradient id="pg" x1="0" y1="0" x2="1" y2="1"><stop offset="0" stop-color="#6a6a6a"/><stop offset="1" stop-color="#2e2e2e"/></linearGradient></defs><path d="M0 0l11.500 6.600L0 13.200z" fill="url(#pg)"/></svg>
<div style="position:absolute;left:1424.4px;top:1055.5px;width:20.09999999999991px;height:19.09999999999991px;background:#f0f0f0;border:1.500px solid;border-color:#7e7e7e #fdfdfd #fdfdfd #7e7e7e"></div>
<svg style="position:absolute;left:1427.5px;top:1058.5px;" width="14" height="14" viewBox="0 0 14 14"><path d="M.5 .8h12.600l-4.800 5.800v6.200l-3-1.600v-4.600z" fill="#bdbdbd" stroke="#a2a2a2" stroke-width=".6"/></svg>
<div style="position:absolute;left:1450px;top:1055.5px;width:119.5px;height:19.09999999999991px;background:#f0f0f0;border:1.500px solid;border-color:#7e7e7e #fdfdfd #fdfdfd #7e7e7e"></div>
<span id="t157" class="t" style="left:1453px;top:1060.17px;font-size:11px;font-weight:400;color:#000;transform-origin:left center;transform:scaleX(0.9470);">1 selected</span>
<div style="position:absolute;left:1575.6px;top:1055.5px;width:248.9000000000001px;height:19.09999999999991px;background:#f0f0f0;border:1.500px solid;border-color:#7e7e7e #fdfdfd #fdfdfd #7e7e7e"></div>
<span id="t158" class="t" style="left:1577.5px;top:1060.17px;font-size:11px;font-weight:400;color:#000;transform-origin:left center;transform:scaleX(1.1230);font-weight:700">-36.43,8.64</span>
<div style="position:absolute;left:1831px;top:1055.5px;width:19.200000000000045px;height:19.09999999999991px;background:#f0f0f0;border:1.500px solid;border-color:#7e7e7e #fdfdfd #fdfdfd #7e7e7e"></div>
<svg style="position:absolute;left:1834.5px;top:1057.5px;" width="13" height="16" viewBox="0 0 13 16"><circle cx="6.500" cy="4" r="3.200" fill="#d8c27a" stroke="#a08a40" stroke-width=".6"/><path d="M1 15.500V11a5.500 4 0 0 1 11 0v4.500z" fill="#6fb36f" stroke="#4f8f4f" stroke-width=".6"/></svg>
<div style="position:absolute;left:1856px;top:1055.5px;width:58.5px;height:19.09999999999991px;background:#f0f0f0;border:1.500px solid;border-color:#7e7e7e #fdfdfd #fdfdfd #7e7e7e"></div>
<span id="t159" class="t" style="left:1885px;top:1060.17px;font-size:11px;font-weight:400;color:#000;transform-origin:center center;transform:translateX(-50%) scaleX(0.8834);">EN</span>
</body></html>
